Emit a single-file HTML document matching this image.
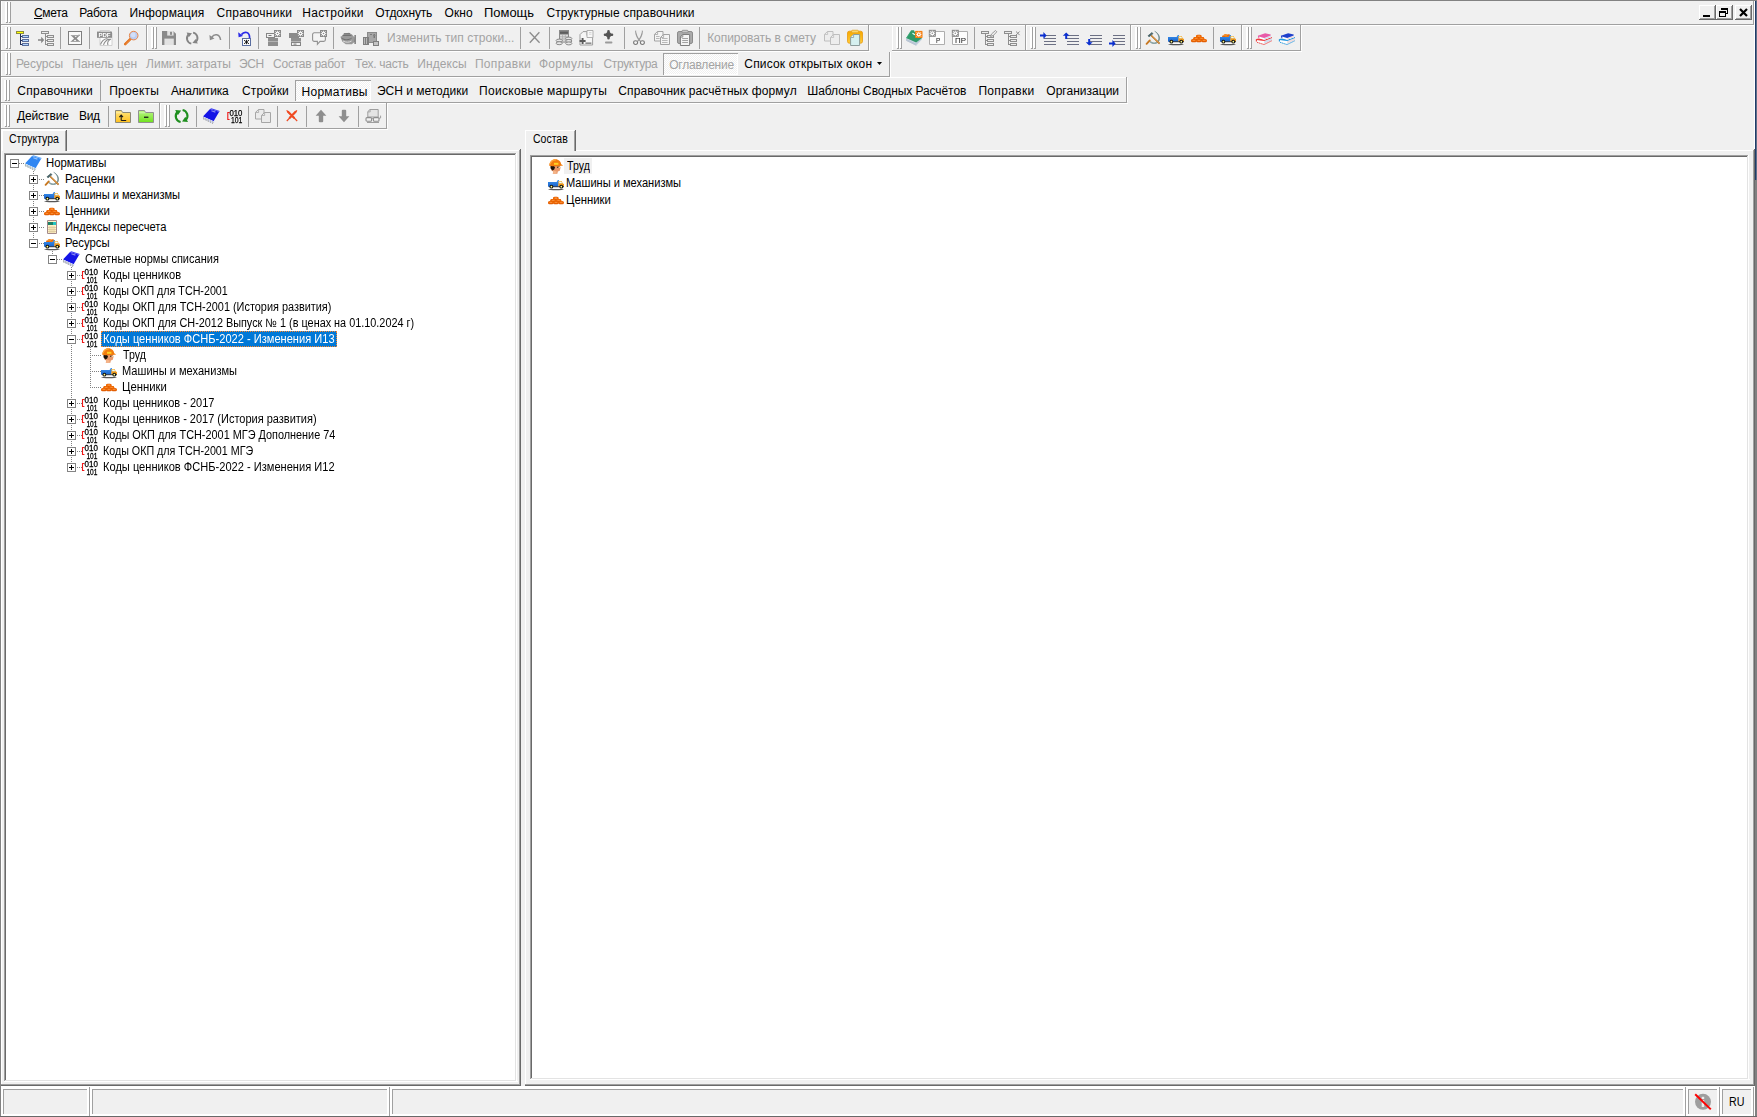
<!DOCTYPE html>
<html lang="ru"><head><meta charset="utf-8"><title>Смета</title>
<style>
html,body{margin:0;padding:0;}
body{width:1757px;height:1117px;overflow:hidden;background:#F0F0F0;position:relative;font-family:"Liberation Sans",sans-serif;}
i{position:absolute;display:block;}
svg{position:absolute;display:block;overflow:visible;}
svg.gl{will-change:transform;}
span{position:absolute;white-space:pre;line-height:1.117;transform-origin:0 0;}
span u{text-decoration:underline;text-underline-offset:1px;}
</style></head><body>
<i style="left:0px;top:0px;width:1757px;height:1px;background:#828282;"></i>
<i style="left:0px;top:0px;width:1px;height:1117px;background:#828282;"></i>
<i style="left:1px;top:1px;width:1px;height:1116px;background:#FFFFFF;"></i>
<i style="left:1754px;top:1px;width:1px;height:1116px;background:#FFFFFF;"></i>
<i style="left:1755px;top:1px;width:1px;height:179px;background:#1F3B69;"></i>
<i style="left:1756px;top:1px;width:1px;height:179px;background:#5F6F88;"></i>
<i style="left:1755px;top:180px;width:2px;height:937px;background:#808080;"></i>
<i style="left:5px;top:2px;width:2px;height:20px;background:#FFFFFF;"></i>
<i style="left:7px;top:2px;width:1px;height:21px;background:#A0A0A0;"></i>
<i style="left:6px;top:22px;width:2px;height:1px;background:#A0A0A0;"></i>
<i style="left:8px;top:2px;width:2px;height:20px;background:#FFFFFF;"></i>
<i style="left:10px;top:2px;width:1px;height:21px;background:#A0A0A0;"></i>
<i style="left:9px;top:22px;width:2px;height:1px;background:#A0A0A0;"></i>
<i style="left:1px;top:24px;width:1753px;height:1px;background:#A0A0A0;"></i>
<i style="left:1px;top:25px;width:1753px;height:1px;background:#FFFFFF;"></i>
<i style="left:1753px;top:1px;width:1px;height:24px;background:#A0A0A0;"></i>
<i style="left:1699px;top:5px;width:17px;height:15px;background:#F0F0F0;"></i>
<i style="left:1699px;top:5px;width:16px;height:1px;background:#FFFFFF;"></i>
<i style="left:1699px;top:5px;width:1px;height:14px;background:#FFFFFF;"></i>
<i style="left:1700px;top:18px;width:15px;height:1px;background:#A0A0A0;"></i>
<i style="left:1714px;top:6px;width:1px;height:13px;background:#A0A0A0;"></i>
<i style="left:1699px;top:19px;width:17px;height:1px;background:#696969;"></i>
<i style="left:1715px;top:5px;width:1px;height:15px;background:#696969;"></i>
<i style="left:1716px;top:5px;width:17px;height:15px;background:#F0F0F0;"></i>
<i style="left:1716px;top:5px;width:16px;height:1px;background:#FFFFFF;"></i>
<i style="left:1716px;top:5px;width:1px;height:14px;background:#FFFFFF;"></i>
<i style="left:1717px;top:18px;width:15px;height:1px;background:#A0A0A0;"></i>
<i style="left:1731px;top:6px;width:1px;height:13px;background:#A0A0A0;"></i>
<i style="left:1716px;top:19px;width:17px;height:1px;background:#696969;"></i>
<i style="left:1732px;top:5px;width:1px;height:15px;background:#696969;"></i>
<i style="left:1735px;top:5px;width:17px;height:15px;background:#F0F0F0;"></i>
<i style="left:1735px;top:5px;width:16px;height:1px;background:#FFFFFF;"></i>
<i style="left:1735px;top:5px;width:1px;height:14px;background:#FFFFFF;"></i>
<i style="left:1736px;top:18px;width:15px;height:1px;background:#A0A0A0;"></i>
<i style="left:1750px;top:6px;width:1px;height:13px;background:#A0A0A0;"></i>
<i style="left:1735px;top:19px;width:17px;height:1px;background:#696969;"></i>
<i style="left:1751px;top:5px;width:1px;height:15px;background:#696969;"></i>
<i style="left:1703px;top:15px;width:7px;height:2px;background:#000;"></i>
<svg style="left:1719px;top:8px" width="10" height="10" viewBox="0 0 10 10" shape-rendering="crispEdges"><path d="M2.5 0.5h6v5h-1.5M2.5 1h6" fill="none" stroke="#000" stroke-width="1"/><rect x="2" y="0" width="7" height="2" fill="#000"/><rect x="0.5" y="3.5" width="6" height="5" fill="none" stroke="#000"/><rect x="0" y="3" width="7" height="2" fill="#000"/></svg>
<svg style="left:1739px;top:8px" width="9" height="9" viewBox="0 0 9 9" ><path d="M1 1L8 8M8 1L1 8" stroke="#000" stroke-width="2.2" fill="none"/></svg>
<i style="left:5px;top:27px;width:2px;height:21px;background:#FFFFFF;"></i>
<i style="left:7px;top:27px;width:1px;height:22px;background:#A0A0A0;"></i>
<i style="left:6px;top:48px;width:2px;height:1px;background:#A0A0A0;"></i>
<i style="left:8px;top:27px;width:2px;height:21px;background:#FFFFFF;"></i>
<i style="left:10px;top:27px;width:1px;height:22px;background:#A0A0A0;"></i>
<i style="left:9px;top:48px;width:2px;height:1px;background:#A0A0A0;"></i>
<svg style="left:16px;top:30px" width="16" height="16" viewBox="0 0 16 16" shape-rendering="crispEdges"><rect x="0" y="1" width="8" height="3" fill="#8E8E3C" /><rect x="1" y="2" width="6" height="1" fill="#FFFF00" /><rect x="4" y="4" width="1" height="11" fill="#25325A" /><rect x="5" y="6" width="1" height="1" fill="#25325A" /><rect x="6" y="5" width="7" height="3" fill="#5A6E9C" /><rect x="7" y="6" width="5" height="1" fill="#B4D6FF" /><rect x="5" y="10" width="1" height="1" fill="#25325A" /><rect x="6" y="9" width="7" height="3" fill="#5A6E9C" /><rect x="7" y="10" width="5" height="1" fill="#B4D6FF" /><rect x="5" y="14" width="1" height="1" fill="#25325A" /><rect x="6" y="13" width="7" height="3" fill="#5A6E9C" /><rect x="7" y="14" width="5" height="1" fill="#B4D6FF" /></svg>
<svg style="left:38px;top:30px" width="16" height="16" viewBox="0 0 16 16" ><g shape-rendering="crispEdges"><rect x="3" y="1" width="8" height="3" fill="#8E8E8E" /><rect x="4" y="2" width="6" height="1" fill="#ECECEC" /><rect x="7" y="4" width="1" height="11" fill="#8E8E8E" /><rect x="8" y="6" width="1" height="1" fill="#8E8E8E" /><rect x="9" y="5" width="7" height="3" fill="#8E8E8E" /><rect x="10" y="6" width="5" height="1" fill="#ECECEC" /><rect x="8" y="10" width="1" height="1" fill="#8E8E8E" /><rect x="9" y="9" width="7" height="3" fill="#8E8E8E" /><rect x="10" y="10" width="5" height="1" fill="#ECECEC" /><rect x="8" y="14" width="1" height="1" fill="#8E8E8E" /><rect x="9" y="13" width="7" height="3" fill="#8E8E8E" /><rect x="10" y="14" width="5" height="1" fill="#ECECEC" /></g><path d="M0 9.2h3.2v-2.4l3 3.2-3 3.2v-2.4h-3.2z" fill="#858585"/></svg>
<i style="left:60px;top:27px;width:1px;height:22px;background:#A0A0A0;"></i>
<svg style="left:68px;top:30px" width="16" height="16" viewBox="0 0 16 16" ><rect x="0" y="1" width="14" height="14" fill="#7E7E7E" /><rect x="1" y="2" width="12" height="12" fill="#FAFAFA" /><path d="M2.5 5l3.2 0 2 2.2 2.6-2.4 2 0-3.6 3.6 3.4 3.4-3 0-2-2.2-2.6 2.4-2.2 0 3.8-3.6z" fill="#8C8C8C"/><path d="M3 5.5h9M3 11.5h9" stroke="#A8A8A8" stroke-width="1"/></svg>
<i style="left:89px;top:27px;width:1px;height:22px;background:#A0A0A0;"></i>
<svg style="left:97px;top:30px" width="16" height="16" viewBox="0 0 16 16"  class="gl"><path d="M3 0.5h9.5l2.5 2.5v12.5h-12z" fill="#FCFCFC" stroke="#C8C8C8" stroke-width="0.8"/><rect x="0" y="1.6" width="15" height="6.2" fill="#8C8C8C" /><text x="1.4" y="6.9" font-family="Liberation Sans,sans-serif" font-weight="bold" font-size="6.2" fill="#fff" textLength="12.2" lengthAdjust="spacingAndGlyphs">PDF</text><path d="M3.5 14.5c1-3 3.5-5.5 7-6M6.5 14.8c1-3 3-5 6-5.8M11 15c-1-2.2 0-4.8 3-6" stroke="#8C8C8C" stroke-width="1.1" fill="none"/></svg>
<i style="left:118px;top:27px;width:1px;height:22px;background:#A0A0A0;"></i>
<svg style="left:124.4px;top:30px" width="16" height="16" viewBox="0 0 16 16" ><path d="M1.2 14.2L6.8 8.6" stroke="#E06A10" stroke-width="2.4" stroke-linecap="round"/><path d="M1.6 14L6.6 9" stroke="#F5A060" stroke-width="0.8" stroke-linecap="round"/><circle cx="9.7" cy="5.6" r="4.3" fill="#BCCDF2" stroke="#E8864A" stroke-width="1"/><circle cx="9.2" cy="5" r="2.4" fill="#D8E4FA" opacity=".8"/></svg>
<i style="left:146px;top:25px;width:1px;height:26px;background:#A0A0A0;"></i>
<i style="left:147px;top:26px;width:1px;height:24px;background:#FFFFFF;"></i>
<i style="left:151px;top:27px;width:2px;height:21px;background:#FFFFFF;"></i>
<i style="left:153px;top:27px;width:1px;height:22px;background:#A0A0A0;"></i>
<i style="left:152px;top:48px;width:2px;height:1px;background:#A0A0A0;"></i>
<i style="left:154px;top:27px;width:2px;height:21px;background:#FFFFFF;"></i>
<i style="left:156px;top:27px;width:1px;height:22px;background:#A0A0A0;"></i>
<i style="left:155px;top:48px;width:2px;height:1px;background:#A0A0A0;"></i>
<svg style="left:162px;top:30px" width="16" height="16" viewBox="0 0 16 16" ><path d="M0 1h11.2l2.8 2.8v11.2h-14z" fill="#8A8A8A"/><rect x="2.4" y="8.6" width="9.4" height="6.4" fill="#E2E2E2" /><rect x="5.2" y="1" width="6.4" height="4.6" fill="#E2E2E2" /><rect x="8.2" y="1.8" width="1.6" height="3" fill="#787878" /></svg>
<svg style="left:185.3px;top:29.9px" width="16" height="16" viewBox="0 0 16 16" ><path d="M6.3 13.6A5.4 5.4 0 0 1 3.4 4.6" fill="none" stroke="#858585" stroke-width="1.9"/><path d="M1.6 2.6l5.4 0.6-3.2 4z" fill="#858585"/><path d="M8.1 2.6A5.4 5.4 0 0 1 11 11.6" fill="none" stroke="#858585" stroke-width="1.9"/><path d="M12.8 13.6l-5.4-0.6 3.2-4z" fill="#858585"/></svg>
<svg style="left:208px;top:30px" width="16" height="16" viewBox="0 0 16 16" ><path d="M3.6 7.6C6 3.6 11.6 3.4 12.6 10" fill="none" stroke="#8C8C8C" stroke-width="1.5"/><path d="M1.4 5l0.5 5.2 4.6-1.6z" fill="#8C8C8C"/></svg>
<i style="left:229px;top:27px;width:1px;height:22px;background:#A0A0A0;"></i>
<svg style="left:237px;top:30px" width="16" height="16" viewBox="0 0 16 16" ><path d="M4.4 4.6C7.4 0.8 12.8 1.6 12.6 8" fill="none" stroke="#2B2BE8" stroke-width="1.7"/><path d="M1.2 2.2l0.4 5 4.4-1.2z" fill="#2B2BE8"/><rect x="5" y="8" width="9" height="8" fill="#5A6EA0" /><rect x="6" y="9" width="7" height="6" fill="#fff" /><path d="M7 10.2l5 3.6M12 10.2l-5 3.6M9.5 9.8v4.4" stroke="#111" stroke-width="0.9"/></svg>
<i style="left:258px;top:27px;width:1px;height:22px;background:#A0A0A0;"></i>
<svg style="left:266px;top:30px" width="16" height="16" viewBox="0 0 16 16" ><rect x="0" y="3" width="9" height="5" fill="#858585" /><rect x="1" y="4" width="7" height="3" fill="#F2F2F2" /><rect x="2.5" y="5" width="3" height="1" fill="#777" /><rect x="2" y="8" width="10" height="3.6" fill="#8E8E8E" /><rect x="2" y="12" width="10" height="4" fill="#8E8E8E" /><rect x="8" y="0" width="7" height="7" fill="#8A8A8A" /><path d="M9.2 1.2000000000000002L13.8 5.8M13.8 1.2000000000000002L9.2 5.8M11.5 0.7000000000000002V6.3M8.7 3.5H14.3" stroke="#fff" stroke-width="0.7"/><circle cx="11.5" cy="3.5" r="1.9" fill="#fff"/><circle cx="11.5" cy="3.5" r="0.8" fill="#8A8A8A"/></svg>
<svg style="left:289px;top:30px" width="16" height="16" viewBox="0 0 16 16" ><rect x="0" y="3" width="10" height="5" fill="#8A8A8A" /><rect x="2" y="8" width="10" height="3.6" fill="#8E8E8E" /><rect x="2" y="12" width="10" height="4" fill="#858585" /><rect x="3" y="13" width="8" height="2" fill="#F2F2F2" /><rect x="4.5" y="13.6" width="3" height="1" fill="#777" /><rect x="8" y="0" width="7" height="7" fill="#8A8A8A" /><path d="M9.2 1.2000000000000002L13.8 5.8M13.8 1.2000000000000002L9.2 5.8M11.5 0.7000000000000002V6.3M8.7 3.5H14.3" stroke="#fff" stroke-width="0.7"/><circle cx="11.5" cy="3.5" r="1.9" fill="#fff"/><circle cx="11.5" cy="3.5" r="0.8" fill="#8A8A8A"/></svg>
<svg style="left:312px;top:30px" width="16" height="16" viewBox="0 0 16 16" ><path d="M2.2 2.8h9.6a1.6 1.6 0 0 1 1.6 1.6v5.4a1.6 1.6 0 0 1-1.6 1.6h-3.8l-2.6 3v-3h-3.2a1.6 1.6 0 0 1-1.6-1.6v-5.4a1.6 1.6 0 0 1 1.6-1.6z" fill="#F4F4F4" stroke="#929292" stroke-width="1.1"/><rect x="8" y="0" width="7" height="7" fill="#8A8A8A" /><path d="M9.2 1.2000000000000002L13.8 5.8M13.8 1.2000000000000002L9.2 5.8M11.5 0.7000000000000002V6.3M8.7 3.5H14.3" stroke="#fff" stroke-width="0.7"/><circle cx="11.5" cy="3.5" r="1.9" fill="#fff"/><circle cx="11.5" cy="3.5" r="0.8" fill="#8A8A8A"/></svg>
<i style="left:333px;top:27px;width:1px;height:22px;background:#A0A0A0;"></i>
<svg style="left:339.5px;top:30px" width="16" height="16" viewBox="0 0 16 16" ><path d="M0.4 6.8l2.6-1.4 0.6-1.8 5.4-0.8 3 1.6 2.4 2.8 0.4 4.6-3 2.4h-6l-3.6-2.6z" fill="#9A9A9A"/><path d="M2.4 5.4h9M4 3.8h6M1.6 8.2c3 2 7 2 10 0" stroke="#6E6E6E" stroke-width="1" fill="none"/><path d="M3 11c3 1.6 6 1.6 8.6 0" stroke="#DADADA" stroke-width="1" fill="none"/><rect x="14.6" y="5" width="1" height="9" fill="#444" /></svg>
<svg style="left:363px;top:30px" width="16" height="16" viewBox="0 0 16 16" ><rect x="4" y="2" width="10" height="11" fill="#8A8A8A" /><rect x="5" y="3" width="8" height="9" fill="#A6A6A6" /><path d="M7 4.5h2M10.5 4.5h1.5M10.5 5l1 3M12 5l-1 3" stroke="#6E6E6E" stroke-width="0.8"/><rect x="0" y="7" width="6" height="8" fill="#7E7E7E" /><rect x="1" y="8" width="1" height="6" fill="#B8B8B8" /><rect x="3" y="8" width="1" height="6" fill="#B8B8B8" /><rect x="10" y="11" width="6" height="5" fill="#7E7E7E" /><rect x="11" y="12" width="4" height="3" fill="#C4C4C4" /></svg>
<i style="left:520px;top:27px;width:1px;height:22px;background:#A0A0A0;"></i>
<svg style="left:526.8px;top:30px" width="16" height="16" viewBox="0 0 16 16" ><path d="M2.6 2.2L12.6 12.8M12.4 2.2L2.8 12.8" stroke="#8C8C8C" stroke-width="1.3" fill="none"/></svg>
<i style="left:549px;top:27px;width:1px;height:22px;background:#A0A0A0;"></i>
<svg style="left:555.7px;top:30px" width="16" height="16" viewBox="0 0 16 16" ><rect x="3" y="0" width="10" height="12.6" fill="#8A8A8A" /><rect x="4" y="1.6" width="8" height="2.2" fill="#5E5E5E" /><rect x="4" y="4.6" width="8" height="7" fill="#DCDCDC" /><path d="M4 6.8h8M4 9h8M6.6 4.6v7M9.3 4.6v7" stroke="#A6A6A6" stroke-width="0.7"/><ellipse cx="3.2" cy="10.6" rx="3.1" ry="1.5" fill="#E8E8E8" stroke="#808080" stroke-width="0.9"/><ellipse cx="3.2" cy="13.2" rx="3.1" ry="1.5" fill="#E8E8E8" stroke="#808080" stroke-width="0.9"/><ellipse cx="12.8" cy="8.6" rx="3.1" ry="1.5" fill="#E8E8E8" stroke="#808080" stroke-width="0.9"/><ellipse cx="12.8" cy="11" rx="3.1" ry="1.5" fill="#E8E8E8" stroke="#808080" stroke-width="0.9"/><ellipse cx="12.8" cy="13.4" rx="3.1" ry="1.5" fill="#E8E8E8" stroke="#808080" stroke-width="0.9"/></svg>
<svg style="left:579px;top:30px" width="16" height="16" viewBox="0 0 16 16" ><path d="M4 1.6h4v4M4 1.6l-3 3v10.4h12.6v-8" fill="#F6F6F6" stroke="#9C9C9C" stroke-width="1"/><path d="M8 0.5h6v7h-6z" fill="#F8F8F8" stroke="#A8A8A8" stroke-width="0.9"/><path d="M10 2.5h2.5M10 4.2h2.5" stroke="#C8C8C8" stroke-width="0.7"/><path d="M3.6 8v6M0.6 11h6" stroke="#5A5A5A" stroke-width="1.9"/><rect x="6.4" y="12.4" width="6" height="1.6" fill="#8E8E8E" /></svg>
<svg style="left:600.8px;top:30px" width="16" height="16" viewBox="0 0 16 16" ><path d="M7.5 1.2v7M4 4.7h7" stroke="#555" stroke-width="2.6" stroke-linecap="round"/><circle cx="7.5" cy="4.7" r="2.6" fill="#555"/><rect x="4" y="11.6" width="7.4" height="2" rx="0.8" fill="#9A9A9A"/></svg>
<i style="left:624px;top:27px;width:1px;height:22px;background:#A0A0A0;"></i>
<svg style="left:630.7px;top:30px" width="16" height="16" viewBox="0 0 16 16" ><path d="M4.6 0.6c0.2 4 1.6 7.4 4.6 10.4M11.4 0.6c-0.2 4-1.6 7.4-4.6 10.4" fill="none" stroke="#9A9A9A" stroke-width="1.2"/><path d="M4.6 0.6l3.4 8 3.4-8" fill="#EDEDED" stroke="none" opacity=".6"/><ellipse cx="4.6" cy="12.6" rx="2" ry="1.9" fill="#F4F4F4" stroke="#7A7A7A" stroke-width="1.1"/><ellipse cx="11.4" cy="12.6" rx="2" ry="1.9" fill="#F4F4F4" stroke="#7A7A7A" stroke-width="1.1"/></svg>
<svg style="left:653.5px;top:30px" width="16" height="16" viewBox="0 0 16 16" ><path d="M3.4 1.5h5.6v9.5h-8.5v-6.6z" fill="#F4F4F4" stroke="#A2A2A2" stroke-width="1"/><path d="M3.6 1.5v3h-3" fill="none" stroke="#A2A2A2" stroke-width="0.8"/><path d="M9.4 4.5h6.1v10h-9v-7z" fill="#F4F4F4" stroke="#A2A2A2" stroke-width="1"/><path d="M9.6 4.5v3h-3" fill="none" stroke="#A2A2A2" stroke-width="0.8"/><path d="M2 6.5h3.6M2 8.5h3.6M8 8.5h5.6M8 10.5h5.6M8 12.5h5.6" stroke="#A8A8A8" stroke-width="0.8"/></svg>
<svg style="left:676.7px;top:30px" width="16" height="16" viewBox="0 0 16 16" ><rect x="0.5" y="1.5" width="15" height="12" rx="1.6" fill="#ABABAB" stroke="#8A8A8A" stroke-width="1"/><rect x="5" y="0.3" width="6" height="2.4" rx="0.8" fill="#C8C8C8" stroke="#8A8A8A" stroke-width="0.8"/><path d="M5.6 4.5h7v11h-9.2v-8.6z" fill="#F4F4F4" stroke="#7E7E7E" stroke-width="1"/><path d="M5.8 4.5v2.6h-2.4" fill="none" stroke="#7E7E7E" stroke-width="0.8"/><path d="M5.2 8.5h5.8M5.2 10.5h5.8M5.2 12.5h5.8" stroke="#8E8E8E" stroke-width="0.8"/></svg>
<i style="left:699px;top:27px;width:1px;height:22px;background:#A0A0A0;"></i>
<svg style="left:824.3px;top:30px" width="16" height="16" viewBox="0 0 16 16" ><path d="M3.4 1.5h5.6v9.5h-8.5v-6.6z" fill="#EDEDED" stroke="#BEBEBE" stroke-width="1"/><path d="M3.6 1.5v3h-3" fill="none" stroke="#BEBEBE" stroke-width="0.8"/><path d="M9.4 4.5h6.1v10h-9v-7z" fill="#EDEDED" stroke="#BEBEBE" stroke-width="1"/><path d="M9.6 4.5v3h-3" fill="none" stroke="#BEBEBE" stroke-width="0.8"/></svg>
<svg style="left:847px;top:30px" width="16" height="16" viewBox="0 0 16 16" ><defs><linearGradient id="py" x1="0" y1="0" x2="0" y2="1"><stop offset="0" stop-color="#F6A800"/><stop offset="1" stop-color="#FFCB3A"/></linearGradient></defs><rect x="0.5" y="1.2" width="15" height="12" rx="1.8" fill="url(#py)" stroke="#E89A10" stroke-width="0.8"/><rect x="4.6" y="0.2" width="6.8" height="2.6" rx="1" fill="#FFD667" stroke="#E0A020" stroke-width="0.7"/><path d="M6.4 4.5h6.2v11h-9v-8.2z" fill="#D6F0F0" stroke="#8C9C9C" stroke-width="1"/><path d="M6.6 4.5v3h-3" fill="#EAF8F8" stroke="#8C9C9C" stroke-width="0.8"/></svg>
<i style="left:868px;top:25px;width:1px;height:26px;background:#A0A0A0;"></i>
<i style="left:869px;top:26px;width:1px;height:24px;background:#FFFFFF;"></i>
<i style="left:892px;top:26px;width:1px;height:25px;background:#FFFFFF;"></i>
<i style="left:896px;top:27px;width:2px;height:21px;background:#FFFFFF;"></i>
<i style="left:898px;top:27px;width:1px;height:22px;background:#A0A0A0;"></i>
<i style="left:897px;top:48px;width:2px;height:1px;background:#A0A0A0;"></i>
<i style="left:899px;top:27px;width:2px;height:21px;background:#FFFFFF;"></i>
<i style="left:901px;top:27px;width:1px;height:22px;background:#A0A0A0;"></i>
<i style="left:900px;top:48px;width:2px;height:1px;background:#A0A0A0;"></i>
<svg style="left:906px;top:30px" width="16" height="16" viewBox="0 0 16 16" ><path d="M0.15 7.9v2.9l10 4.9 5.75-6.2v-1.6z" fill="#C9D5E2"/><path d="M0.3 9.4l9.9 4.8 5.6-6M0.3 10.4l9.9 4.8" stroke="#A9B7C8" stroke-width="0.6" fill="none"/><path d="M5.2 0.3h2.9l0.3 1.2 7.5 6.4-5.7 4.7-10.05-4.7z" fill="#2F9A6A"/><path d="M5.2 0.3l-5.05 7.6 1.2 0.5z" fill="#3FAE7C" opacity=".7"/><path d="M6.9 3.4l1.6 1.1" stroke="#E8FFF4" stroke-width="1.2" stroke-linecap="round"/><rect x="9.3" y="0.9" width="7" height="7" rx="1" fill="#F57E0E"/><rect x="9.3" y="0.9" width="7" height="7" fill="#F57E0E" /><path d="M10.5 2.1000000000000005L15.100000000000001 6.7M15.100000000000001 2.1000000000000005L10.5 6.7M12.8 1.6000000000000005V7.2M10.0 4.4H15.600000000000001" stroke="#fff" stroke-width="0.7"/><circle cx="12.8" cy="4.4" r="1.9" fill="#fff"/><circle cx="12.8" cy="4.4" r="0.8" fill="#F57E0E"/></svg>
<svg style="left:929px;top:30px" width="16" height="16" viewBox="0 0 16 16"  class="gl"><path d="M0.5 1.5h15v13h-15z" fill="#FDFDFD" stroke="#AEAEAE" stroke-width="1"/><rect x="0" y="0" width="6.6" height="6.6" rx="1" fill="#909090"/><rect x="-0.2" y="-0.2" width="7" height="7" fill="#909090" /><path d="M1.0 1.0L5.6 5.6M5.6 1.0L1.0 5.6M3.3 0.5V6.1M0.5 3.3H6.1" stroke="#fff" stroke-width="0.7"/><circle cx="3.3" cy="3.3" r="1.9" fill="#fff"/><circle cx="3.3" cy="3.3" r="0.8" fill="#909090"/><text x="7" y="12.9" font-family="Liberation Sans,sans-serif" font-size="7.8" fill="#111" textLength="4.3" lengthAdjust="spacingAndGlyphs">Р</text></svg>
<svg style="left:952px;top:30px" width="16" height="16" viewBox="0 0 16 16"  class="gl"><path d="M0.5 1.5h15v13h-15z" fill="#FDFDFD" stroke="#AEAEAE" stroke-width="1"/><rect x="0" y="0" width="6.6" height="6.6" rx="1" fill="#909090"/><rect x="-0.2" y="-0.2" width="7" height="7" fill="#909090" /><path d="M1.0 1.0L5.6 5.6M5.6 1.0L1.0 5.6M3.3 0.5V6.1M0.5 3.3H6.1" stroke="#fff" stroke-width="0.7"/><circle cx="3.3" cy="3.3" r="1.9" fill="#fff"/><circle cx="3.3" cy="3.3" r="0.8" fill="#909090"/><text x="3" y="12.9" font-family="Liberation Sans,sans-serif" font-size="7.8" fill="#111" textLength="11" lengthAdjust="spacingAndGlyphs">ПР</text></svg>
<i style="left:974px;top:27px;width:1px;height:22px;background:#A0A0A0;"></i>
<svg style="left:981px;top:30px" width="16" height="16" viewBox="0 0 16 16" ><g shape-rendering="crispEdges"><rect x="0" y="1" width="8" height="3" fill="#8E8E8E" /><rect x="1" y="2" width="6" height="1" fill="#ECECEC" /><rect x="4" y="4" width="1" height="11" fill="#8E8E8E" /><rect x="5" y="6" width="1" height="1" fill="#8E8E8E" /><rect x="6" y="5" width="7" height="3" fill="#8E8E8E" /><rect x="7" y="6" width="5" height="1" fill="#ECECEC" /><rect x="5" y="10" width="1" height="1" fill="#8E8E8E" /><rect x="6" y="9" width="7" height="3" fill="#8E8E8E" /><rect x="7" y="10" width="5" height="1" fill="#ECECEC" /><rect x="5" y="14" width="1" height="1" fill="#8E8E8E" /><rect x="6" y="13" width="7" height="3" fill="#8E8E8E" /><rect x="7" y="14" width="5" height="1" fill="#ECECEC" /></g><path d="M9.5 6.5l1-2.5 4-3.5 1.3 1.3-3.6 3.8z" fill="#F0F0F0" stroke="#8E8E8E" stroke-width="0.9"/></svg>
<svg style="left:1004px;top:30px" width="16" height="16" viewBox="0 0 16 16" ><g shape-rendering="crispEdges"><rect x="0" y="1" width="8" height="3" fill="#8E8E8E" /><rect x="1" y="2" width="6" height="1" fill="#ECECEC" /><rect x="4" y="4" width="1" height="11" fill="#8E8E8E" /><rect x="5" y="6" width="1" height="1" fill="#8E8E8E" /><rect x="6" y="5" width="7" height="3" fill="#8E8E8E" /><rect x="7" y="6" width="5" height="1" fill="#ECECEC" /><rect x="5" y="10" width="1" height="1" fill="#8E8E8E" /><rect x="6" y="9" width="7" height="3" fill="#8E8E8E" /><rect x="7" y="10" width="5" height="1" fill="#ECECEC" /><rect x="5" y="14" width="1" height="1" fill="#8E8E8E" /><rect x="6" y="13" width="7" height="3" fill="#8E8E8E" /><rect x="7" y="14" width="5" height="1" fill="#ECECEC" /></g><path d="M12 1.5l3.6 3.6M15.6 1.5l-3.6 3.6" stroke="#8E8E8E" stroke-width="1" fill="none"/></svg>
<i style="left:1025px;top:25px;width:1px;height:26px;background:#A0A0A0;"></i>
<i style="left:1026px;top:26px;width:1px;height:24px;background:#FFFFFF;"></i>
<i style="left:1030px;top:27px;width:2px;height:21px;background:#FFFFFF;"></i>
<i style="left:1032px;top:27px;width:1px;height:22px;background:#A0A0A0;"></i>
<i style="left:1031px;top:48px;width:2px;height:1px;background:#A0A0A0;"></i>
<i style="left:1033px;top:27px;width:2px;height:21px;background:#FFFFFF;"></i>
<i style="left:1035px;top:27px;width:1px;height:22px;background:#A0A0A0;"></i>
<i style="left:1034px;top:48px;width:2px;height:1px;background:#A0A0A0;"></i>
<svg style="left:1040px;top:30px" width="16" height="16" viewBox="0 0 16 16" ><g shape-rendering="crispEdges"><rect x="4" y="5" width="12" height="1" fill="#6C7084" /><rect x="4" y="8" width="12" height="1" fill="#6C7084" /><rect x="4" y="11" width="12" height="1" fill="#6C7084" /><rect x="4" y="14" width="12" height="1" fill="#6C7084" /></g><path d="M0 4.5h3.4v-2.6l3.2 3.6-3.2 3.6v-2.6h-3.4z" fill="#0A2FD0"/></svg>
<svg style="left:1063px;top:30px" width="16" height="16" viewBox="0 0 16 16" ><g shape-rendering="crispEdges"><rect x="4" y="5" width="12" height="1" fill="#6C7084" /><rect x="4" y="8" width="12" height="1" fill="#6C7084" /><rect x="4" y="11" width="12" height="1" fill="#6C7084" /><rect x="4" y="14" width="12" height="1" fill="#6C7084" /></g><path d="M2.2 9v-3.2h-2.4l3.4-3.2 3.4 3.2h-2.4v3.2z" fill="#0A2FD0"/></svg>
<svg style="left:1086px;top:30px" width="16" height="16" viewBox="0 0 16 16" ><g shape-rendering="crispEdges"><rect x="4" y="5" width="12" height="1" fill="#6C7084" /><rect x="4" y="8" width="12" height="1" fill="#6C7084" /><rect x="4" y="11" width="12" height="1" fill="#6C7084" /><rect x="4" y="14" width="12" height="1" fill="#6C7084" /></g><path d="M2.2 9v3.2h-2.4l3.4 3.2 3.4-3.2h-2.4v-3.2z" fill="#0A2FD0"/></svg>
<svg style="left:1109px;top:30px" width="16" height="16" viewBox="0 0 16 16" ><g shape-rendering="crispEdges"><rect x="4" y="5" width="12" height="1" fill="#6C7084" /><rect x="4" y="8" width="12" height="1" fill="#6C7084" /><rect x="4" y="11" width="12" height="1" fill="#6C7084" /><rect x="4" y="14" width="12" height="1" fill="#6C7084" /></g><path d="M0 12.5h3.4v-2.6l3.2 3.6-3.2 3.6v-2.6h-3.4z" fill="#0A2FD0"/></svg>
<i style="left:1130px;top:25px;width:1px;height:26px;background:#A0A0A0;"></i>
<i style="left:1131px;top:26px;width:1px;height:24px;background:#FFFFFF;"></i>
<i style="left:1135px;top:27px;width:2px;height:21px;background:#FFFFFF;"></i>
<i style="left:1137px;top:27px;width:1px;height:22px;background:#A0A0A0;"></i>
<i style="left:1136px;top:48px;width:2px;height:1px;background:#A0A0A0;"></i>
<i style="left:1138px;top:27px;width:2px;height:21px;background:#FFFFFF;"></i>
<i style="left:1140px;top:27px;width:1px;height:22px;background:#A0A0A0;"></i>
<i style="left:1139px;top:48px;width:2px;height:1px;background:#A0A0A0;"></i>
<svg style="left:1145px;top:30px" width="16" height="16" viewBox="0 0 16 16" ><path d="M9.6 1.2C14.4 3 16.6 8.4 13.4 12.2 11 15 6.6 14.4 4.4 12l0.9-1C7.6 12.8 10.6 13 12.4 11 14.6 8.4 13.2 3.8 9.6 1.2z" fill="#8CA4A6"/><path d="M9.6 1.2C13.6 3.4 15.4 7.6 13.6 11" fill="none" stroke="#5E7A7E" stroke-width="0.6"/><path d="M1.6 13.8l3.2-3.4" stroke="#C87820" stroke-width="1.9" stroke-linecap="round"/><path d="M6 5.2l8.6 8.4" stroke="#B06A1C" stroke-width="1.6"/><path d="M6 5.2l8.2 8" stroke="#E8A048" stroke-width="0.8"/><path d="M3 5.8l4-3.2 1 1-4 3.2z" fill="#4A6468" stroke="#4A6468" stroke-width="0.8" stroke-linejoin="round"/></svg>
<svg style="left:1168px;top:30px" width="16" height="16" viewBox="0 0 16 16" ><defs><linearGradient id="tb" x1="0" y1="0" x2="0" y2="1"><stop offset="0" stop-color="#3A92F0"/><stop offset="1" stop-color="#1B63C8"/></linearGradient></defs><ellipse cx="8" cy="14.5" rx="7.8" ry="0.7" fill="#3a3a3a" opacity=".85"/><path d="M0 7h8.6l1.2-1.9h1.2l-0.6 6.6h-10.4z" fill="url(#tb)"/><path d="M10.6 5.9h2.9l1.3 2.5 1.2 0.5v2.8h-5.7z" fill="#F09A1C"/><path d="M10.6 5.9h2.9l0.6 1.2h-3.6z" fill="#F8B84A"/><path d="M11.2 6.7h2.2l0.7 1.5h-2.9z" fill="#E6FFFF"/><rect x="0.6" y="12" width="15" height="2" fill="#fff" opacity=".85"/><rect x="1.4" y="11.4" width="14.6" height="0.8" fill="#1a1a1a" /><circle cx="3.4" cy="11.7" r="1.9" fill="#111"/><circle cx="3.4" cy="11.7" r="0.85" fill="#FFFF8A"/><circle cx="13.3" cy="11.7" r="1.9" fill="#111"/><circle cx="13.3" cy="11.7" r="0.85" fill="#FFFF8A"/></svg>
<svg style="left:1191px;top:30px" width="16" height="16" viewBox="0 0 16 16" ><rect x="5.05" y="4.8500000000000005" width="5.5" height="3.1" rx="1.5" fill="#D85400"/><rect x="5.199999999999999" y="4.9" width="5.2" height="2.4" rx="1.2" fill="#F06A04"/><rect x="6.6" y="5.8500000000000005" width="2.6" height="0.6" rx="0.3" fill="#FFAE66"/><rect x="2.3499999999999996" y="6.95" width="5.5" height="3.1" rx="1.5" fill="#D85400"/><rect x="2.4999999999999996" y="7.0" width="5.2" height="2.4" rx="1.2" fill="#F06A04"/><rect x="3.8999999999999995" y="7.95" width="2.6" height="0.6" rx="0.3" fill="#FFAE66"/><rect x="7.75" y="6.95" width="5.5" height="3.1" rx="1.5" fill="#D85400"/><rect x="7.9" y="7.0" width="5.2" height="2.4" rx="1.2" fill="#F06A04"/><rect x="9.3" y="7.95" width="2.6" height="0.6" rx="0.3" fill="#FFAE66"/><rect x="0.04999999999999982" y="9.149999999999999" width="5.5" height="3.1" rx="1.5" fill="#D85400"/><rect x="0.19999999999999973" y="9.2" width="5.2" height="2.4" rx="1.2" fill="#F06A04"/><rect x="1.5999999999999999" y="10.149999999999999" width="2.6" height="0.6" rx="0.3" fill="#FFAE66"/><rect x="5.15" y="9.149999999999999" width="5.5" height="3.1" rx="1.5" fill="#D85400"/><rect x="5.300000000000001" y="9.2" width="5.2" height="2.4" rx="1.2" fill="#F06A04"/><rect x="6.7" y="10.149999999999999" width="2.6" height="0.6" rx="0.3" fill="#FFAE66"/><rect x="10.35" y="9.149999999999999" width="5.5" height="3.1" rx="1.5" fill="#D85400"/><rect x="10.5" y="9.2" width="5.2" height="2.4" rx="1.2" fill="#F06A04"/><rect x="11.9" y="10.149999999999999" width="2.6" height="0.6" rx="0.3" fill="#FFAE66"/></svg>
<i style="left:1213px;top:27px;width:1px;height:22px;background:#A0A0A0;"></i>
<svg style="left:1220px;top:30px" width="16" height="16" viewBox="0 0 16 16" ><defs><linearGradient id="tb" x1="0" y1="0" x2="0" y2="1"><stop offset="0" stop-color="#3A92F0"/><stop offset="1" stop-color="#1B63C8"/></linearGradient></defs><ellipse cx="8" cy="14.5" rx="7.8" ry="0.7" fill="#3a3a3a" opacity=".85"/><ellipse cx="4" cy="6.4" rx="2" ry="1.2" fill="#E86A08"/><ellipse cx="7" cy="6.2" rx="2" ry="1.2" fill="#F07A10"/><ellipse cx="5.6" cy="5" rx="2" ry="1.1" fill="#F58A20"/><ellipse cx="8.6" cy="5.2" rx="1.6" ry="1" fill="#E86A08"/><path d="M0 7h8.6l1.2-1.9h1.2l-0.6 6.6h-10.4z" fill="url(#tb)"/><path d="M10.6 5.9h2.9l1.3 2.5 1.2 0.5v2.8h-5.7z" fill="#F09A1C"/><path d="M10.6 5.9h2.9l0.6 1.2h-3.6z" fill="#F8B84A"/><path d="M11.2 6.7h2.2l0.7 1.5h-2.9z" fill="#E6FFFF"/><rect x="0.6" y="12" width="15" height="2" fill="#fff" opacity=".85"/><rect x="1.4" y="11.4" width="14.6" height="0.8" fill="#1a1a1a" /><circle cx="3.4" cy="11.7" r="1.9" fill="#111"/><circle cx="3.4" cy="11.7" r="0.85" fill="#FFFF8A"/><circle cx="13.3" cy="11.7" r="1.9" fill="#111"/><circle cx="13.3" cy="11.7" r="0.85" fill="#FFFF8A"/></svg>
<i style="left:1241px;top:25px;width:1px;height:26px;background:#A0A0A0;"></i>
<i style="left:1242px;top:26px;width:1px;height:24px;background:#FFFFFF;"></i>
<i style="left:1246px;top:27px;width:2px;height:21px;background:#FFFFFF;"></i>
<i style="left:1248px;top:27px;width:1px;height:22px;background:#A0A0A0;"></i>
<i style="left:1247px;top:48px;width:2px;height:1px;background:#A0A0A0;"></i>
<i style="left:1249px;top:27px;width:2px;height:21px;background:#FFFFFF;"></i>
<i style="left:1251px;top:27px;width:1px;height:22px;background:#A0A0A0;"></i>
<i style="left:1250px;top:48px;width:2px;height:1px;background:#A0A0A0;"></i>
<svg style="left:1256px;top:30px" width="16" height="16" viewBox="0 0 16 16" ><path d="M0.6 10l7.6 1 7.7-2.9v2.3l-7.7 3.1-7.1-1.6z" fill="#fff"/><path d="M8.2 11l7.7-2.9v2.3l-7.7 3z" fill="#D0DEEE"/><path d="M1.1 12.3l6.9 2.3 7.9-3.9" fill="none" stroke="#F03A3A" stroke-width="1" stroke-dasharray="1.4 0.8"/><path d="M0.3 9.1l2.6-0.7 5.3 1.4 7.7-2.8 0.1 0.9-7.8 3-7.8-0.9z" fill="#F03A3A"/><path d="M0.4 9.2v2.4" stroke="#F03A3A" stroke-width="1.1"/><path d="M3.2 6.7l5 1.5 6.5-2.5 0.3 1.5-6.8 2.5-5-1.6z" fill="#fff"/><path d="M8.2 8.2l6.5-2.5 0.3 1.5-6.8 2.5z" fill="#D0DEEE"/><path d="M2.6 5.4l6.5-2.1 5.6 1.1v1.1l-6.5 2.6-5.3-1.5z" fill="#E85AA8"/><path d="M2.4 5.6l0.5 2.3" stroke="#E85AA8" stroke-width="1.1"/></svg>
<svg style="left:1279px;top:30px" width="16" height="16" viewBox="0 0 16 16" ><path d="M0.6 10l7.6 1 7.7-2.9v2.3l-7.7 3.1-7.1-1.6z" fill="#fff"/><path d="M8.2 11l7.7-2.9v2.3l-7.7 3z" fill="#F0DCDC"/><path d="M1.1 12.3l6.9 2.3 7.9-3.9" fill="none" stroke="#1E96E0" stroke-width="1" stroke-dasharray="1.4 0.8"/><path d="M0.3 9.1l2.6-0.7 5.3 1.4 7.7-2.8 0.1 0.9-7.8 3-7.8-0.9z" fill="#1E96E0"/><path d="M0.4 9.2v2.4" stroke="#1E96E0" stroke-width="1.1"/><path d="M3.2 6.7l5 1.5 6.5-2.5 0.3 1.5-6.8 2.5-5-1.6z" fill="#fff"/><path d="M8.2 8.2l6.5-2.5 0.3 1.5-6.8 2.5z" fill="#F0DCDC"/><path d="M2.6 5.4l6.5-2.1 5.6 1.1v1.1l-6.5 2.6-5.3-1.5z" fill="#2040CC"/><path d="M2.4 5.6l0.5 2.3" stroke="#2040CC" stroke-width="1.1"/></svg>
<i style="left:1300px;top:25px;width:1px;height:26px;background:#A0A0A0;"></i>
<i style="left:1301px;top:26px;width:1px;height:24px;background:#FFFFFF;"></i>
<i style="left:1px;top:50px;width:868px;height:1px;background:#A0A0A0;"></i>
<i style="left:1px;top:51px;width:869px;height:1px;background:#FFFFFF;"></i>
<i style="left:892px;top:50px;width:409px;height:1px;background:#A0A0A0;"></i>
<i style="left:892px;top:51px;width:410px;height:1px;background:#FFFFFF;"></i>
<i style="left:5px;top:53px;width:2px;height:21px;background:#FFFFFF;"></i>
<i style="left:7px;top:53px;width:1px;height:22px;background:#A0A0A0;"></i>
<i style="left:6px;top:74px;width:2px;height:1px;background:#A0A0A0;"></i>
<i style="left:8px;top:53px;width:2px;height:21px;background:#FFFFFF;"></i>
<i style="left:10px;top:53px;width:1px;height:22px;background:#A0A0A0;"></i>
<i style="left:9px;top:74px;width:2px;height:1px;background:#A0A0A0;"></i>
<i style="left:663px;top:53px;width:75px;height:22px;background:repeating-conic-gradient(#fff 0 25%,#F0F0F0 0 50%) 0 0/2px 2px;"></i>
<i style="left:663px;top:53px;width:75px;height:1px;background:#A0A0A0;"></i>
<i style="left:663px;top:53px;width:1px;height:22px;background:#A0A0A0;"></i>
<i style="left:664px;top:74px;width:74px;height:1px;background:#FFFFFF;"></i>
<i style="left:737px;top:54px;width:1px;height:21px;background:#FFFFFF;"></i>
<svg style="left:877px;top:62px" width="5" height="3" viewBox="0 0 5 3" ><path d="M0 0h5L2.5 3z" fill="#000"/></svg>
<i style="left:1px;top:76px;width:889px;height:1px;background:#A0A0A0;"></i>
<i style="left:1px;top:77px;width:1126px;height:1px;background:#FFFFFF;"></i>
<i style="left:889px;top:52px;width:1px;height:25px;background:#A0A0A0;"></i>
<i style="left:890px;top:52px;width:1px;height:25px;background:#FFFFFF;"></i>
<i style="left:4px;top:80px;width:2px;height:20px;background:#FFFFFF;"></i>
<i style="left:6px;top:80px;width:1px;height:21px;background:#A0A0A0;"></i>
<i style="left:5px;top:100px;width:2px;height:1px;background:#A0A0A0;"></i>
<i style="left:7px;top:80px;width:2px;height:20px;background:#FFFFFF;"></i>
<i style="left:9px;top:80px;width:1px;height:21px;background:#A0A0A0;"></i>
<i style="left:8px;top:100px;width:2px;height:1px;background:#A0A0A0;"></i>
<i style="left:100px;top:80px;width:1px;height:21px;background:#A0A0A0;"></i>
<i style="left:295px;top:80px;width:76px;height:21px;background:repeating-conic-gradient(#fff 0 25%,#F0F0F0 0 50%) 0 0/2px 2px;"></i>
<i style="left:295px;top:80px;width:76px;height:1px;background:#A0A0A0;"></i>
<i style="left:295px;top:80px;width:1px;height:21px;background:#A0A0A0;"></i>
<i style="left:296px;top:100px;width:75px;height:1px;background:#FFFFFF;"></i>
<i style="left:370px;top:81px;width:1px;height:20px;background:#FFFFFF;"></i>
<i style="left:1px;top:102px;width:1126px;height:1px;background:#A0A0A0;"></i>
<i style="left:1px;top:103px;width:1127px;height:1px;background:#FFFFFF;"></i>
<i style="left:1126px;top:77px;width:1px;height:26px;background:#A0A0A0;"></i>
<i style="left:1127px;top:78px;width:1px;height:24px;background:#FFFFFF;"></i>
<i style="left:4px;top:105px;width:2px;height:21px;background:#FFFFFF;"></i>
<i style="left:6px;top:105px;width:1px;height:22px;background:#A0A0A0;"></i>
<i style="left:5px;top:126px;width:2px;height:1px;background:#A0A0A0;"></i>
<i style="left:7px;top:105px;width:2px;height:21px;background:#FFFFFF;"></i>
<i style="left:9px;top:105px;width:1px;height:22px;background:#A0A0A0;"></i>
<i style="left:8px;top:126px;width:2px;height:1px;background:#A0A0A0;"></i>
<i style="left:108px;top:106px;width:1px;height:21px;background:#A0A0A0;"></i>
<svg style="left:115px;top:108.8px" width="16" height="16" viewBox="0 0 16 16" ><defs><linearGradient id="fFFE680" x1="0" y1="0" x2="0" y2="1"><stop offset="0" stop-color="#FFE680"/><stop offset="1" stop-color="#FFC01E"/></linearGradient></defs><path d="M0.5 1.5h6l1 2h8v10h-15z" fill="url(#fFFE680)" stroke="#8E8A76" stroke-width="1"/><path d="M1 3.8h6.4" stroke="#fff" stroke-width="0.6" opacity=".7"/><path d="M6.2 11.6v-4.6M4.4 8.2l1.8-2.2 1.8 2.2M6.2 11.4h5" fill="none" stroke="#1a1a1a" stroke-width="1.05"/></svg>
<svg style="left:138px;top:108.8px" width="16" height="16" viewBox="0 0 16 16" ><defs><linearGradient id="fBDF58A" x1="0" y1="0" x2="0" y2="1"><stop offset="0" stop-color="#BDF58A"/><stop offset="1" stop-color="#6EE21C"/></linearGradient></defs><path d="M0.5 1.5h6l1 2h8v10h-15z" fill="url(#fBDF58A)" stroke="#909090" stroke-width="1"/><path d="M1 3.8h6.4" stroke="#fff" stroke-width="0.6" opacity=".7"/><rect x="6" y="7.6" width="4.4" height="1.3" fill="#1a1a1a" /></svg>
<i style="left:159px;top:103px;width:1px;height:26px;background:#A0A0A0;"></i>
<i style="left:160px;top:104px;width:1px;height:24px;background:#FFFFFF;"></i>
<i style="left:164px;top:105px;width:2px;height:21px;background:#FFFFFF;"></i>
<i style="left:166px;top:105px;width:1px;height:22px;background:#A0A0A0;"></i>
<i style="left:165px;top:126px;width:2px;height:1px;background:#A0A0A0;"></i>
<i style="left:167px;top:105px;width:2px;height:21px;background:#FFFFFF;"></i>
<i style="left:169px;top:105px;width:1px;height:22px;background:#A0A0A0;"></i>
<i style="left:168px;top:126px;width:2px;height:1px;background:#A0A0A0;"></i>
<svg style="left:174.2px;top:108.2px" width="16" height="16" viewBox="0 0 16 16" ><path d="M6.6 14A6 6 0 0 1 3.2 4.2" fill="none" stroke="#1F8F1F" stroke-width="2.1"/><path d="M1.2 2l6 0.6-3.4 4.6z" fill="#1F8F1F"/><path d="M8.6 2A6 6 0 0 1 12 11.8" fill="none" stroke="#1F8F1F" stroke-width="2.1"/><path d="M14 14l-6-0.6 3.4-4.6z" fill="#1F8F1F"/></svg>
<i style="left:196px;top:106px;width:1px;height:21px;background:#A0A0A0;"></i>
<svg style="left:203px;top:108.2px" width="16" height="16" viewBox="0 0 16 16" ><path d="M7 0.9l9.2 2.9-5.6 9.4-10.6-4.6z" fill="#1414E6"/><path d="M7 0.9l1.4-0.7 8.4 2.8-0.6 0.8z" fill="#3C3CF4"/><path d="M0 8.6l10.6 4.6 0.8-1.2v1.6l-1.4 2.2-10.2-4.8z" fill="#D6DCFF"/><path d="M0 9.6l10.4 4.7M0 10.7l10 4.8" stroke="#8C8C70" stroke-width="0.7" stroke-dasharray="1.5 1"/><path d="M8.4 2.8l4 1.3" stroke="#fff" stroke-width="1.2" opacity=".5"/></svg>
<svg style="left:225.5px;top:108px" width="16" height="16" viewBox="0 0 16 16"  class="gl"><path d="M3.6 4.5h-1.8v7h1.8" fill="none" stroke="#F01818" stroke-width="1.1"/><text x="3.4" y="7.8" font-family="Liberation Sans,sans-serif" font-size="9.2" fill="#000" stroke="#000" stroke-width="0.25" textLength="13" lengthAdjust="spacingAndGlyphs">010</text><text x="5" y="15.2" font-family="Liberation Sans,sans-serif" font-size="9.2" fill="#000" stroke="#000" stroke-width="0.25" textLength="11.4" lengthAdjust="spacingAndGlyphs">101</text></svg>
<i style="left:248px;top:106px;width:1px;height:21px;background:#A0A0A0;"></i>
<svg style="left:255px;top:108.4px" width="16" height="16" viewBox="0 0 16 16" ><path d="M3.4 1.5h5.6v9.5h-8.5v-6.6z" fill="#EBEBEB" stroke="#A6A6A6" stroke-width="1"/><path d="M3.6 1.5v3h-3" fill="none" stroke="#A6A6A6" stroke-width="0.8"/><path d="M9.4 4.5h6.1v10h-9v-7z" fill="#EBEBEB" stroke="#A6A6A6" stroke-width="1"/><path d="M9.6 4.5v3h-3" fill="none" stroke="#A6A6A6" stroke-width="0.8"/></svg>
<i style="left:277px;top:106px;width:1px;height:21px;background:#A0A0A0;"></i>
<svg style="left:284.2px;top:108px" width="16" height="16" viewBox="0 0 16 16" ><path d="M2.6 2.4L13.2 13M13 2.4L2.8 13" stroke="#F04A22" stroke-width="1.2" fill="none"/><path d="M4 3.8L10 9.8M11.6 3.8L5.8 9.8" stroke="#F04A22" stroke-width="2.2" stroke-linecap="round" fill="none"/></svg>
<i style="left:306px;top:106px;width:1px;height:21px;background:#A0A0A0;"></i>
<svg style="left:313px;top:108px" width="16" height="16" viewBox="0 0 16 16" ><path d="M8 1.8l5.4 6h-3.2v5.4a1 1 0 0 1-1 1h-2.4a1 1 0 0 1-1-1v-5.4h-3.2z" fill="#8E8E8E"/></svg>
<svg style="left:336px;top:108px" width="16" height="16" viewBox="0 0 16 16" ><path d="M8 14.2l5.4-6h-3.2v-5.4a1 1 0 0 0-1-1h-2.4a1 1 0 0 0-1 1v5.4h-3.2z" fill="#8E8E8E"/></svg>
<i style="left:358px;top:106px;width:1px;height:21px;background:#A0A0A0;"></i>
<svg style="left:365.4px;top:108px" width="16" height="16" viewBox="0 0 16 16" ><path d="M5 1.5h8.2v7.5h-10.4v-5.4z" fill="#E4E4E4" stroke="#9E9E9E" stroke-width="1"/><path d="M5.2 1.5v2.4h-2.4" fill="none" stroke="#9E9E9E" stroke-width="0.8"/><rect x="1" y="9.6" width="5.6" height="3.6" rx="1" fill="#F2F2F2" stroke="#8E8E8E" stroke-width="1.1"/><rect x="8.4" y="9.6" width="5.6" height="3.6" rx="1" fill="#F2F2F2" stroke="#8E8E8E" stroke-width="1.1"/><path d="M6.6 10.4h1.8M14 10.4l1.6-0.4v-2.4M2 14.5h12" fill="none" stroke="#9E9E9E" stroke-width="1"/></svg>
<i style="left:1px;top:128px;width:386px;height:1px;background:#A0A0A0;"></i>
<i style="left:1px;top:129px;width:387px;height:1px;background:#FFFFFF;"></i>
<i style="left:386px;top:103px;width:1px;height:26px;background:#A0A0A0;"></i>
<i style="left:387px;top:104px;width:1px;height:24px;background:#FFFFFF;"></i>
<i style="left:2px;top:130px;width:63px;height:1px;background:#FFFFFF;"></i>
<i style="left:2px;top:130px;width:1px;height:21px;background:#FFFFFF;"></i>
<i style="left:65px;top:131px;width:1px;height:20px;background:#A0A0A0;"></i>
<i style="left:66px;top:130px;width:1px;height:21px;background:#696969;"></i>
<i style="left:67px;top:150px;width:452px;height:1px;background:#FFFFFF;"></i>
<i style="left:519px;top:150px;width:1px;height:935px;background:#A0A0A0;"></i>
<i style="left:520px;top:149px;width:1px;height:937px;background:#696969;"></i>
<i style="left:1px;top:1084px;width:519px;height:1px;background:#A0A0A0;"></i>
<i style="left:1px;top:1085px;width:520px;height:1px;background:#696969;"></i>
<i style="left:4px;top:153px;width:513px;height:929px;background:#FFFFFF;"></i>
<i style="left:4px;top:153px;width:513px;height:1px;background:#A0A0A0;"></i>
<i style="left:4px;top:153px;width:1px;height:929px;background:#A0A0A0;"></i>
<i style="left:5px;top:154px;width:511px;height:1px;background:#696969;"></i>
<i style="left:5px;top:154px;width:1px;height:927px;background:#696969;"></i>
<i style="left:5px;top:1080px;width:512px;height:1px;background:#E3E3E3;"></i>
<i style="left:515px;top:154px;width:1px;height:927px;background:#E3E3E3;"></i>
<i style="left:4px;top:1081px;width:514px;height:1px;background:#FFFFFF;"></i>
<i style="left:516px;top:153px;width:1px;height:929px;background:#FFFFFF;"></i>
<i style="left:33px;top:171px;width:1px;height:73px;background:repeating-linear-gradient(to bottom,#808080 0,#808080 1px,transparent 1px,transparent 2px)"></i>
<i style="left:52px;top:251px;width:1px;height:9px;background:repeating-linear-gradient(to bottom,#808080 0,#808080 1px,transparent 1px,transparent 2px)"></i>
<i style="left:71px;top:267px;width:1px;height:201px;background:repeating-linear-gradient(to bottom,#808080 0,#808080 1px,transparent 1px,transparent 2px)"></i>
<i style="left:90px;top:347px;width:1px;height:41px;background:repeating-linear-gradient(to bottom,#808080 0,#808080 1px,transparent 1px,transparent 2px)"></i>
<i style="left:19px;top:163px;height:1px;width:5px;background:repeating-linear-gradient(to right,#808080 0,#808080 1px,transparent 1px,transparent 2px)"></i>
<i style="left:10px;top:159px;width:9px;height:9px;background:#fff;box-sizing:border-box;border:1px solid #848484"></i>
<i style="left:12px;top:163px;width:5px;height:1px;background:#000;"></i>
<svg style="left:25px;top:155.2px" width="16" height="16" viewBox="0 0 16 16" ><path d="M7 0.9l9.2 2.9-5.6 9.4-10.6-4.6z" fill="#2F86F2"/><path d="M7 0.9l1.4-0.7 8.4 2.8-0.6 0.8z" fill="#58A4FA"/><path d="M0 8.6l10.6 4.6 0.8-1.2v1.6l-1.4 2.2-10.2-4.8z" fill="#D4E8FF"/><path d="M0 9.6l10.4 4.7M0 10.7l10 4.8" stroke="#8C8C70" stroke-width="0.7" stroke-dasharray="1.5 1"/><path d="M8.4 2.8l4 1.3" stroke="#fff" stroke-width="1.2" opacity=".5"/></svg>
<i style="left:39px;top:179px;height:1px;width:5px;background:repeating-linear-gradient(to right,#808080 0,#808080 1px,transparent 1px,transparent 2px)"></i>
<i style="left:29px;top:175px;width:9px;height:9px;background:#fff;box-sizing:border-box;border:1px solid #848484"></i>
<i style="left:31px;top:179px;width:5px;height:1px;background:#000;"></i>
<i style="left:33px;top:177px;width:1px;height:5px;background:#000;"></i>
<svg style="left:44px;top:171px" width="16" height="16" viewBox="0 0 16 16" ><path d="M9.6 1.2C14.4 3 16.6 8.4 13.4 12.2 11 15 6.6 14.4 4.4 12l0.9-1C7.6 12.8 10.6 13 12.4 11 14.6 8.4 13.2 3.8 9.6 1.2z" fill="#8CA4A6"/><path d="M9.6 1.2C13.6 3.4 15.4 7.6 13.6 11" fill="none" stroke="#5E7A7E" stroke-width="0.6"/><path d="M1.6 13.8l3.2-3.4" stroke="#C87820" stroke-width="1.9" stroke-linecap="round"/><path d="M6 5.2l8.6 8.4" stroke="#B06A1C" stroke-width="1.6"/><path d="M6 5.2l8.2 8" stroke="#E8A048" stroke-width="0.8"/><path d="M3 5.8l4-3.2 1 1-4 3.2z" fill="#4A6468" stroke="#4A6468" stroke-width="0.8" stroke-linejoin="round"/></svg>
<i style="left:39px;top:195px;height:1px;width:5px;background:repeating-linear-gradient(to right,#808080 0,#808080 1px,transparent 1px,transparent 2px)"></i>
<i style="left:29px;top:191px;width:9px;height:9px;background:#fff;box-sizing:border-box;border:1px solid #848484"></i>
<i style="left:31px;top:195px;width:5px;height:1px;background:#000;"></i>
<i style="left:33px;top:193px;width:1px;height:5px;background:#000;"></i>
<svg style="left:44px;top:187px" width="16" height="16" viewBox="0 0 16 16" ><defs><linearGradient id="tb" x1="0" y1="0" x2="0" y2="1"><stop offset="0" stop-color="#3A92F0"/><stop offset="1" stop-color="#1B63C8"/></linearGradient></defs><ellipse cx="8" cy="14.5" rx="7.8" ry="0.7" fill="#3a3a3a" opacity=".85"/><path d="M0 7h8.6l1.2-1.9h1.2l-0.6 6.6h-10.4z" fill="url(#tb)"/><path d="M10.6 5.9h2.9l1.3 2.5 1.2 0.5v2.8h-5.7z" fill="#F09A1C"/><path d="M10.6 5.9h2.9l0.6 1.2h-3.6z" fill="#F8B84A"/><path d="M11.2 6.7h2.2l0.7 1.5h-2.9z" fill="#E6FFFF"/><rect x="0.6" y="12" width="15" height="2" fill="#fff" opacity=".85"/><rect x="1.4" y="11.4" width="14.6" height="0.8" fill="#1a1a1a" /><circle cx="3.4" cy="11.7" r="1.9" fill="#111"/><circle cx="3.4" cy="11.7" r="0.85" fill="#FFFF8A"/><circle cx="13.3" cy="11.7" r="1.9" fill="#111"/><circle cx="13.3" cy="11.7" r="0.85" fill="#FFFF8A"/></svg>
<i style="left:39px;top:211px;height:1px;width:5px;background:repeating-linear-gradient(to right,#808080 0,#808080 1px,transparent 1px,transparent 2px)"></i>
<i style="left:29px;top:207px;width:9px;height:9px;background:#fff;box-sizing:border-box;border:1px solid #848484"></i>
<i style="left:31px;top:211px;width:5px;height:1px;background:#000;"></i>
<i style="left:33px;top:209px;width:1px;height:5px;background:#000;"></i>
<svg style="left:44px;top:203px" width="16" height="16" viewBox="0 0 16 16" ><rect x="5.05" y="4.8500000000000005" width="5.5" height="3.1" rx="1.5" fill="#D85400"/><rect x="5.199999999999999" y="4.9" width="5.2" height="2.4" rx="1.2" fill="#F06A04"/><rect x="6.6" y="5.8500000000000005" width="2.6" height="0.6" rx="0.3" fill="#FFAE66"/><rect x="2.3499999999999996" y="6.95" width="5.5" height="3.1" rx="1.5" fill="#D85400"/><rect x="2.4999999999999996" y="7.0" width="5.2" height="2.4" rx="1.2" fill="#F06A04"/><rect x="3.8999999999999995" y="7.95" width="2.6" height="0.6" rx="0.3" fill="#FFAE66"/><rect x="7.75" y="6.95" width="5.5" height="3.1" rx="1.5" fill="#D85400"/><rect x="7.9" y="7.0" width="5.2" height="2.4" rx="1.2" fill="#F06A04"/><rect x="9.3" y="7.95" width="2.6" height="0.6" rx="0.3" fill="#FFAE66"/><rect x="0.04999999999999982" y="9.149999999999999" width="5.5" height="3.1" rx="1.5" fill="#D85400"/><rect x="0.19999999999999973" y="9.2" width="5.2" height="2.4" rx="1.2" fill="#F06A04"/><rect x="1.5999999999999999" y="10.149999999999999" width="2.6" height="0.6" rx="0.3" fill="#FFAE66"/><rect x="5.15" y="9.149999999999999" width="5.5" height="3.1" rx="1.5" fill="#D85400"/><rect x="5.300000000000001" y="9.2" width="5.2" height="2.4" rx="1.2" fill="#F06A04"/><rect x="6.7" y="10.149999999999999" width="2.6" height="0.6" rx="0.3" fill="#FFAE66"/><rect x="10.35" y="9.149999999999999" width="5.5" height="3.1" rx="1.5" fill="#D85400"/><rect x="10.5" y="9.2" width="5.2" height="2.4" rx="1.2" fill="#F06A04"/><rect x="11.9" y="10.149999999999999" width="2.6" height="0.6" rx="0.3" fill="#FFAE66"/></svg>
<i style="left:39px;top:227px;height:1px;width:5px;background:repeating-linear-gradient(to right,#808080 0,#808080 1px,transparent 1px,transparent 2px)"></i>
<i style="left:29px;top:223px;width:9px;height:9px;background:#fff;box-sizing:border-box;border:1px solid #848484"></i>
<i style="left:31px;top:227px;width:5px;height:1px;background:#000;"></i>
<i style="left:33px;top:225px;width:1px;height:5px;background:#000;"></i>
<svg style="left:44px;top:219px" width="16" height="16" viewBox="0 0 16 16" ><rect x="3" y="1" width="10" height="14" fill="#A48A8A" rx="1"/><rect x="4" y="2" width="8" height="12" fill="#FFF2C6" /><rect x="4" y="3" width="5" height="3" fill="#1F8068" /><rect x="9" y="3" width="3" height="3" fill="#22C4C4" /><path d="M4 8.5h8M4 10.5h8M4 12.5h8M6 7v7M8 7v7M10 7v7" stroke="#D8C49A" stroke-width="0.7"/></svg>
<i style="left:39px;top:243px;height:1px;width:5px;background:repeating-linear-gradient(to right,#808080 0,#808080 1px,transparent 1px,transparent 2px)"></i>
<i style="left:29px;top:239px;width:9px;height:9px;background:#fff;box-sizing:border-box;border:1px solid #848484"></i>
<i style="left:31px;top:243px;width:5px;height:1px;background:#000;"></i>
<svg style="left:44px;top:235px" width="16" height="16" viewBox="0 0 16 16" ><defs><linearGradient id="tb" x1="0" y1="0" x2="0" y2="1"><stop offset="0" stop-color="#3A92F0"/><stop offset="1" stop-color="#1B63C8"/></linearGradient></defs><ellipse cx="8" cy="14.5" rx="7.8" ry="0.7" fill="#3a3a3a" opacity=".85"/><ellipse cx="4" cy="6.4" rx="2" ry="1.2" fill="#E86A08"/><ellipse cx="7" cy="6.2" rx="2" ry="1.2" fill="#F07A10"/><ellipse cx="5.6" cy="5" rx="2" ry="1.1" fill="#F58A20"/><ellipse cx="8.6" cy="5.2" rx="1.6" ry="1" fill="#E86A08"/><path d="M0 7h8.6l1.2-1.9h1.2l-0.6 6.6h-10.4z" fill="url(#tb)"/><path d="M10.6 5.9h2.9l1.3 2.5 1.2 0.5v2.8h-5.7z" fill="#F09A1C"/><path d="M10.6 5.9h2.9l0.6 1.2h-3.6z" fill="#F8B84A"/><path d="M11.2 6.7h2.2l0.7 1.5h-2.9z" fill="#E6FFFF"/><rect x="0.6" y="12" width="15" height="2" fill="#fff" opacity=".85"/><rect x="1.4" y="11.4" width="14.6" height="0.8" fill="#1a1a1a" /><circle cx="3.4" cy="11.7" r="1.9" fill="#111"/><circle cx="3.4" cy="11.7" r="0.85" fill="#FFFF8A"/><circle cx="13.3" cy="11.7" r="1.9" fill="#111"/><circle cx="13.3" cy="11.7" r="0.85" fill="#FFFF8A"/></svg>
<i style="left:57px;top:259px;height:1px;width:5px;background:repeating-linear-gradient(to right,#808080 0,#808080 1px,transparent 1px,transparent 2px)"></i>
<i style="left:48px;top:255px;width:9px;height:9px;background:#fff;box-sizing:border-box;border:1px solid #848484"></i>
<i style="left:50px;top:259px;width:5px;height:1px;background:#000;"></i>
<svg style="left:63px;top:251.2px" width="16" height="16" viewBox="0 0 16 16" ><path d="M7 0.9l9.2 2.9-5.6 9.4-10.6-4.6z" fill="#1414E6"/><path d="M7 0.9l1.4-0.7 8.4 2.8-0.6 0.8z" fill="#3C3CF4"/><path d="M0 8.6l10.6 4.6 0.8-1.2v1.6l-1.4 2.2-10.2-4.8z" fill="#D6DCFF"/><path d="M0 9.6l10.4 4.7M0 10.7l10 4.8" stroke="#8C8C70" stroke-width="0.7" stroke-dasharray="1.5 1"/><path d="M8.4 2.8l4 1.3" stroke="#fff" stroke-width="1.2" opacity=".5"/></svg>
<i style="left:77px;top:275px;height:1px;width:5px;background:repeating-linear-gradient(to right,#808080 0,#808080 1px,transparent 1px,transparent 2px)"></i>
<i style="left:67px;top:271px;width:9px;height:9px;background:#fff;box-sizing:border-box;border:1px solid #848484"></i>
<i style="left:69px;top:275px;width:5px;height:1px;background:#000;"></i>
<i style="left:71px;top:273px;width:1px;height:5px;background:#000;"></i>
<svg style="left:82px;top:267px" width="16" height="16" viewBox="0 0 16 16"  class="gl"><path d="M2.4 4.5h-1.9v7h1.9" fill="none" stroke="#F01818" stroke-width="1.1"/><text x="2.6" y="7.8" font-family="Liberation Sans,sans-serif" font-size="9.6" fill="#000" stroke="#000" stroke-width="0.3" textLength="13.4" lengthAdjust="spacingAndGlyphs">010</text><text x="4.4" y="15.9" font-family="Liberation Sans,sans-serif" font-size="9.6" fill="#000" stroke="#000" stroke-width="0.3" textLength="11" lengthAdjust="spacingAndGlyphs">101</text></svg>
<i style="left:77px;top:291px;height:1px;width:5px;background:repeating-linear-gradient(to right,#808080 0,#808080 1px,transparent 1px,transparent 2px)"></i>
<i style="left:67px;top:287px;width:9px;height:9px;background:#fff;box-sizing:border-box;border:1px solid #848484"></i>
<i style="left:69px;top:291px;width:5px;height:1px;background:#000;"></i>
<i style="left:71px;top:289px;width:1px;height:5px;background:#000;"></i>
<svg style="left:82px;top:283px" width="16" height="16" viewBox="0 0 16 16"  class="gl"><path d="M2.4 4.5h-1.9v7h1.9" fill="none" stroke="#F01818" stroke-width="1.1"/><text x="2.6" y="7.8" font-family="Liberation Sans,sans-serif" font-size="9.6" fill="#000" stroke="#000" stroke-width="0.3" textLength="13.4" lengthAdjust="spacingAndGlyphs">010</text><text x="4.4" y="15.9" font-family="Liberation Sans,sans-serif" font-size="9.6" fill="#000" stroke="#000" stroke-width="0.3" textLength="11" lengthAdjust="spacingAndGlyphs">101</text></svg>
<i style="left:77px;top:307px;height:1px;width:5px;background:repeating-linear-gradient(to right,#808080 0,#808080 1px,transparent 1px,transparent 2px)"></i>
<i style="left:67px;top:303px;width:9px;height:9px;background:#fff;box-sizing:border-box;border:1px solid #848484"></i>
<i style="left:69px;top:307px;width:5px;height:1px;background:#000;"></i>
<i style="left:71px;top:305px;width:1px;height:5px;background:#000;"></i>
<svg style="left:82px;top:299px" width="16" height="16" viewBox="0 0 16 16"  class="gl"><path d="M2.4 4.5h-1.9v7h1.9" fill="none" stroke="#F01818" stroke-width="1.1"/><text x="2.6" y="7.8" font-family="Liberation Sans,sans-serif" font-size="9.6" fill="#000" stroke="#000" stroke-width="0.3" textLength="13.4" lengthAdjust="spacingAndGlyphs">010</text><text x="4.4" y="15.9" font-family="Liberation Sans,sans-serif" font-size="9.6" fill="#000" stroke="#000" stroke-width="0.3" textLength="11" lengthAdjust="spacingAndGlyphs">101</text></svg>
<i style="left:77px;top:323px;height:1px;width:5px;background:repeating-linear-gradient(to right,#808080 0,#808080 1px,transparent 1px,transparent 2px)"></i>
<i style="left:67px;top:319px;width:9px;height:9px;background:#fff;box-sizing:border-box;border:1px solid #848484"></i>
<i style="left:69px;top:323px;width:5px;height:1px;background:#000;"></i>
<i style="left:71px;top:321px;width:1px;height:5px;background:#000;"></i>
<svg style="left:82px;top:315px" width="16" height="16" viewBox="0 0 16 16"  class="gl"><path d="M2.4 4.5h-1.9v7h1.9" fill="none" stroke="#F01818" stroke-width="1.1"/><text x="2.6" y="7.8" font-family="Liberation Sans,sans-serif" font-size="9.6" fill="#000" stroke="#000" stroke-width="0.3" textLength="13.4" lengthAdjust="spacingAndGlyphs">010</text><text x="4.4" y="15.9" font-family="Liberation Sans,sans-serif" font-size="9.6" fill="#000" stroke="#000" stroke-width="0.3" textLength="11" lengthAdjust="spacingAndGlyphs">101</text></svg>
<i style="left:77px;top:339px;height:1px;width:5px;background:repeating-linear-gradient(to right,#808080 0,#808080 1px,transparent 1px,transparent 2px)"></i>
<i style="left:67px;top:335px;width:9px;height:9px;background:#fff;box-sizing:border-box;border:1px solid #848484"></i>
<i style="left:69px;top:339px;width:5px;height:1px;background:#000;"></i>
<svg style="left:82px;top:331px" width="16" height="16" viewBox="0 0 16 16"  class="gl"><path d="M2.4 4.5h-1.9v7h1.9" fill="none" stroke="#F01818" stroke-width="1.1"/><text x="2.6" y="7.8" font-family="Liberation Sans,sans-serif" font-size="9.6" fill="#000" stroke="#000" stroke-width="0.3" textLength="13.4" lengthAdjust="spacingAndGlyphs">010</text><text x="4.4" y="15.9" font-family="Liberation Sans,sans-serif" font-size="9.6" fill="#000" stroke="#000" stroke-width="0.3" textLength="11" lengthAdjust="spacingAndGlyphs">101</text></svg>
<i style="left:101px;top:331px;width:236px;height:16px;background:#0078D7;"></i>
<i style="left:101px;top:331px;width:236px;height:16px;background:transparent;box-sizing:border-box;border:1px dotted #ff8728"></i>
<i style="left:92px;top:355px;height:1px;width:9px;background:repeating-linear-gradient(to right,#808080 0,#808080 1px,transparent 1px,transparent 2px)"></i>
<svg style="left:99.8px;top:347px" width="16" height="16" viewBox="0 0 16 16" ><path d="M5.4 8l-1.8 1.6 1 3.2 1.6 0.6-0.4 2.4h4.6l0.4-2.2 2-0.8 0.8-3.2-1-2.4z" fill="#E8986A"/><path d="M6.4 12.6l-0.6 3.2h3.4l0.6-2.4z" fill="#F4B488"/><path d="M3.4 8.2l3.2-0.6 1.4 1.6-0.8 2.2-1.8 1-1.8-1.8z" fill="#1a1008"/><path d="M10 9.2h2.4" stroke="#2a1a0a" stroke-width="1"/><path d="M11.4 9.4h1.8" stroke="#F8E8C0" stroke-width="0.9"/><path d="M2.2 7.8C2.4 3.6 5 1.2 8.4 1.2c3.4 0 5.4 2.4 5.8 5l2 1.4c-4 0.8-9.4 1-14 0.2z" fill="#F27C0E"/><path d="M3 6.4c1-3.4 3.4-4.8 6-4.6" stroke="#FFA83C" stroke-width="1.2" fill="none"/><rect x="7" y="4.8" width="4.4" height="2" fill="#FFD024"/></svg>
<i style="left:92px;top:371px;height:1px;width:9px;background:repeating-linear-gradient(to right,#808080 0,#808080 1px,transparent 1px,transparent 2px)"></i>
<svg style="left:101px;top:363px" width="16" height="16" viewBox="0 0 16 16" ><defs><linearGradient id="tb" x1="0" y1="0" x2="0" y2="1"><stop offset="0" stop-color="#3A92F0"/><stop offset="1" stop-color="#1B63C8"/></linearGradient></defs><ellipse cx="8" cy="14.5" rx="7.8" ry="0.7" fill="#3a3a3a" opacity=".85"/><path d="M0 7h8.6l1.2-1.9h1.2l-0.6 6.6h-10.4z" fill="url(#tb)"/><path d="M10.6 5.9h2.9l1.3 2.5 1.2 0.5v2.8h-5.7z" fill="#F09A1C"/><path d="M10.6 5.9h2.9l0.6 1.2h-3.6z" fill="#F8B84A"/><path d="M11.2 6.7h2.2l0.7 1.5h-2.9z" fill="#E6FFFF"/><rect x="0.6" y="12" width="15" height="2" fill="#fff" opacity=".85"/><rect x="1.4" y="11.4" width="14.6" height="0.8" fill="#1a1a1a" /><circle cx="3.4" cy="11.7" r="1.9" fill="#111"/><circle cx="3.4" cy="11.7" r="0.85" fill="#FFFF8A"/><circle cx="13.3" cy="11.7" r="1.9" fill="#111"/><circle cx="13.3" cy="11.7" r="0.85" fill="#FFFF8A"/></svg>
<i style="left:92px;top:387px;height:1px;width:9px;background:repeating-linear-gradient(to right,#808080 0,#808080 1px,transparent 1px,transparent 2px)"></i>
<svg style="left:101px;top:379px" width="16" height="16" viewBox="0 0 16 16" ><rect x="5.05" y="4.8500000000000005" width="5.5" height="3.1" rx="1.5" fill="#D85400"/><rect x="5.199999999999999" y="4.9" width="5.2" height="2.4" rx="1.2" fill="#F06A04"/><rect x="6.6" y="5.8500000000000005" width="2.6" height="0.6" rx="0.3" fill="#FFAE66"/><rect x="2.3499999999999996" y="6.95" width="5.5" height="3.1" rx="1.5" fill="#D85400"/><rect x="2.4999999999999996" y="7.0" width="5.2" height="2.4" rx="1.2" fill="#F06A04"/><rect x="3.8999999999999995" y="7.95" width="2.6" height="0.6" rx="0.3" fill="#FFAE66"/><rect x="7.75" y="6.95" width="5.5" height="3.1" rx="1.5" fill="#D85400"/><rect x="7.9" y="7.0" width="5.2" height="2.4" rx="1.2" fill="#F06A04"/><rect x="9.3" y="7.95" width="2.6" height="0.6" rx="0.3" fill="#FFAE66"/><rect x="0.04999999999999982" y="9.149999999999999" width="5.5" height="3.1" rx="1.5" fill="#D85400"/><rect x="0.19999999999999973" y="9.2" width="5.2" height="2.4" rx="1.2" fill="#F06A04"/><rect x="1.5999999999999999" y="10.149999999999999" width="2.6" height="0.6" rx="0.3" fill="#FFAE66"/><rect x="5.15" y="9.149999999999999" width="5.5" height="3.1" rx="1.5" fill="#D85400"/><rect x="5.300000000000001" y="9.2" width="5.2" height="2.4" rx="1.2" fill="#F06A04"/><rect x="6.7" y="10.149999999999999" width="2.6" height="0.6" rx="0.3" fill="#FFAE66"/><rect x="10.35" y="9.149999999999999" width="5.5" height="3.1" rx="1.5" fill="#D85400"/><rect x="10.5" y="9.2" width="5.2" height="2.4" rx="1.2" fill="#F06A04"/><rect x="11.9" y="10.149999999999999" width="2.6" height="0.6" rx="0.3" fill="#FFAE66"/></svg>
<i style="left:77px;top:403px;height:1px;width:5px;background:repeating-linear-gradient(to right,#808080 0,#808080 1px,transparent 1px,transparent 2px)"></i>
<i style="left:67px;top:399px;width:9px;height:9px;background:#fff;box-sizing:border-box;border:1px solid #848484"></i>
<i style="left:69px;top:403px;width:5px;height:1px;background:#000;"></i>
<i style="left:71px;top:401px;width:1px;height:5px;background:#000;"></i>
<svg style="left:82px;top:395px" width="16" height="16" viewBox="0 0 16 16"  class="gl"><path d="M2.4 4.5h-1.9v7h1.9" fill="none" stroke="#F01818" stroke-width="1.1"/><text x="2.6" y="7.8" font-family="Liberation Sans,sans-serif" font-size="9.6" fill="#000" stroke="#000" stroke-width="0.3" textLength="13.4" lengthAdjust="spacingAndGlyphs">010</text><text x="4.4" y="15.9" font-family="Liberation Sans,sans-serif" font-size="9.6" fill="#000" stroke="#000" stroke-width="0.3" textLength="11" lengthAdjust="spacingAndGlyphs">101</text></svg>
<i style="left:77px;top:419px;height:1px;width:5px;background:repeating-linear-gradient(to right,#808080 0,#808080 1px,transparent 1px,transparent 2px)"></i>
<i style="left:67px;top:415px;width:9px;height:9px;background:#fff;box-sizing:border-box;border:1px solid #848484"></i>
<i style="left:69px;top:419px;width:5px;height:1px;background:#000;"></i>
<i style="left:71px;top:417px;width:1px;height:5px;background:#000;"></i>
<svg style="left:82px;top:411px" width="16" height="16" viewBox="0 0 16 16"  class="gl"><path d="M2.4 4.5h-1.9v7h1.9" fill="none" stroke="#F01818" stroke-width="1.1"/><text x="2.6" y="7.8" font-family="Liberation Sans,sans-serif" font-size="9.6" fill="#000" stroke="#000" stroke-width="0.3" textLength="13.4" lengthAdjust="spacingAndGlyphs">010</text><text x="4.4" y="15.9" font-family="Liberation Sans,sans-serif" font-size="9.6" fill="#000" stroke="#000" stroke-width="0.3" textLength="11" lengthAdjust="spacingAndGlyphs">101</text></svg>
<i style="left:77px;top:435px;height:1px;width:5px;background:repeating-linear-gradient(to right,#808080 0,#808080 1px,transparent 1px,transparent 2px)"></i>
<i style="left:67px;top:431px;width:9px;height:9px;background:#fff;box-sizing:border-box;border:1px solid #848484"></i>
<i style="left:69px;top:435px;width:5px;height:1px;background:#000;"></i>
<i style="left:71px;top:433px;width:1px;height:5px;background:#000;"></i>
<svg style="left:82px;top:427px" width="16" height="16" viewBox="0 0 16 16"  class="gl"><path d="M2.4 4.5h-1.9v7h1.9" fill="none" stroke="#F01818" stroke-width="1.1"/><text x="2.6" y="7.8" font-family="Liberation Sans,sans-serif" font-size="9.6" fill="#000" stroke="#000" stroke-width="0.3" textLength="13.4" lengthAdjust="spacingAndGlyphs">010</text><text x="4.4" y="15.9" font-family="Liberation Sans,sans-serif" font-size="9.6" fill="#000" stroke="#000" stroke-width="0.3" textLength="11" lengthAdjust="spacingAndGlyphs">101</text></svg>
<i style="left:77px;top:451px;height:1px;width:5px;background:repeating-linear-gradient(to right,#808080 0,#808080 1px,transparent 1px,transparent 2px)"></i>
<i style="left:67px;top:447px;width:9px;height:9px;background:#fff;box-sizing:border-box;border:1px solid #848484"></i>
<i style="left:69px;top:451px;width:5px;height:1px;background:#000;"></i>
<i style="left:71px;top:449px;width:1px;height:5px;background:#000;"></i>
<svg style="left:82px;top:443px" width="16" height="16" viewBox="0 0 16 16"  class="gl"><path d="M2.4 4.5h-1.9v7h1.9" fill="none" stroke="#F01818" stroke-width="1.1"/><text x="2.6" y="7.8" font-family="Liberation Sans,sans-serif" font-size="9.6" fill="#000" stroke="#000" stroke-width="0.3" textLength="13.4" lengthAdjust="spacingAndGlyphs">010</text><text x="4.4" y="15.9" font-family="Liberation Sans,sans-serif" font-size="9.6" fill="#000" stroke="#000" stroke-width="0.3" textLength="11" lengthAdjust="spacingAndGlyphs">101</text></svg>
<i style="left:77px;top:467px;height:1px;width:5px;background:repeating-linear-gradient(to right,#808080 0,#808080 1px,transparent 1px,transparent 2px)"></i>
<i style="left:67px;top:463px;width:9px;height:9px;background:#fff;box-sizing:border-box;border:1px solid #848484"></i>
<i style="left:69px;top:467px;width:5px;height:1px;background:#000;"></i>
<i style="left:71px;top:465px;width:1px;height:5px;background:#000;"></i>
<svg style="left:82px;top:459px" width="16" height="16" viewBox="0 0 16 16"  class="gl"><path d="M2.4 4.5h-1.9v7h1.9" fill="none" stroke="#F01818" stroke-width="1.1"/><text x="2.6" y="7.8" font-family="Liberation Sans,sans-serif" font-size="9.6" fill="#000" stroke="#000" stroke-width="0.3" textLength="13.4" lengthAdjust="spacingAndGlyphs">010</text><text x="4.4" y="15.9" font-family="Liberation Sans,sans-serif" font-size="9.6" fill="#000" stroke="#000" stroke-width="0.3" textLength="11" lengthAdjust="spacingAndGlyphs">101</text></svg>
<i style="left:525px;top:130px;width:49px;height:1px;background:#FFFFFF;"></i>
<i style="left:525px;top:130px;width:1px;height:955px;background:#FFFFFF;"></i>
<i style="left:574px;top:131px;width:1px;height:20px;background:#A0A0A0;"></i>
<i style="left:575px;top:130px;width:1px;height:21px;background:#696969;"></i>
<i style="left:576px;top:150px;width:1177px;height:1px;background:#FFFFFF;"></i>
<i style="left:1753px;top:150px;width:1px;height:935px;background:#A0A0A0;"></i>
<i style="left:1754px;top:149px;width:1px;height:937px;background:#696969;"></i>
<i style="left:525px;top:1084px;width:1229px;height:1px;background:#A0A0A0;"></i>
<i style="left:525px;top:1085px;width:1230px;height:1px;background:#696969;"></i>
<i style="left:530px;top:155px;width:1219px;height:925px;background:#FFFFFF;"></i>
<i style="left:530px;top:155px;width:1219px;height:1px;background:#A0A0A0;"></i>
<i style="left:530px;top:155px;width:1px;height:925px;background:#A0A0A0;"></i>
<i style="left:531px;top:156px;width:1217px;height:1px;background:#696969;"></i>
<i style="left:531px;top:156px;width:1px;height:923px;background:#696969;"></i>
<i style="left:531px;top:1078px;width:1218px;height:1px;background:#E3E3E3;"></i>
<i style="left:1747px;top:156px;width:1px;height:923px;background:#E3E3E3;"></i>
<i style="left:530px;top:1079px;width:1220px;height:1px;background:#FFFFFF;"></i>
<i style="left:1748px;top:155px;width:1px;height:925px;background:#FFFFFF;"></i>
<i style="left:564px;top:158px;width:28px;height:16px;background:#F0F0F0;"></i>
<svg style="left:546.8px;top:158px" width="16" height="16" viewBox="0 0 16 16" ><path d="M5.4 8l-1.8 1.6 1 3.2 1.6 0.6-0.4 2.4h4.6l0.4-2.2 2-0.8 0.8-3.2-1-2.4z" fill="#E8986A"/><path d="M6.4 12.6l-0.6 3.2h3.4l0.6-2.4z" fill="#F4B488"/><path d="M3.4 8.2l3.2-0.6 1.4 1.6-0.8 2.2-1.8 1-1.8-1.8z" fill="#1a1008"/><path d="M10 9.2h2.4" stroke="#2a1a0a" stroke-width="1"/><path d="M11.4 9.4h1.8" stroke="#F8E8C0" stroke-width="0.9"/><path d="M2.2 7.8C2.4 3.6 5 1.2 8.4 1.2c3.4 0 5.4 2.4 5.8 5l2 1.4c-4 0.8-9.4 1-14 0.2z" fill="#F27C0E"/><path d="M3 6.4c1-3.4 3.4-4.8 6-4.6" stroke="#FFA83C" stroke-width="1.2" fill="none"/><rect x="7" y="4.8" width="4.4" height="2" fill="#FFD024"/></svg>
<svg style="left:548px;top:175px" width="16" height="16" viewBox="0 0 16 16" ><defs><linearGradient id="tb" x1="0" y1="0" x2="0" y2="1"><stop offset="0" stop-color="#3A92F0"/><stop offset="1" stop-color="#1B63C8"/></linearGradient></defs><ellipse cx="8" cy="14.5" rx="7.8" ry="0.7" fill="#3a3a3a" opacity=".85"/><path d="M0 7h8.6l1.2-1.9h1.2l-0.6 6.6h-10.4z" fill="url(#tb)"/><path d="M10.6 5.9h2.9l1.3 2.5 1.2 0.5v2.8h-5.7z" fill="#F09A1C"/><path d="M10.6 5.9h2.9l0.6 1.2h-3.6z" fill="#F8B84A"/><path d="M11.2 6.7h2.2l0.7 1.5h-2.9z" fill="#E6FFFF"/><rect x="0.6" y="12" width="15" height="2" fill="#fff" opacity=".85"/><rect x="1.4" y="11.4" width="14.6" height="0.8" fill="#1a1a1a" /><circle cx="3.4" cy="11.7" r="1.9" fill="#111"/><circle cx="3.4" cy="11.7" r="0.85" fill="#FFFF8A"/><circle cx="13.3" cy="11.7" r="1.9" fill="#111"/><circle cx="13.3" cy="11.7" r="0.85" fill="#FFFF8A"/></svg>
<svg style="left:548px;top:192px" width="16" height="16" viewBox="0 0 16 16" ><rect x="5.05" y="4.8500000000000005" width="5.5" height="3.1" rx="1.5" fill="#D85400"/><rect x="5.199999999999999" y="4.9" width="5.2" height="2.4" rx="1.2" fill="#F06A04"/><rect x="6.6" y="5.8500000000000005" width="2.6" height="0.6" rx="0.3" fill="#FFAE66"/><rect x="2.3499999999999996" y="6.95" width="5.5" height="3.1" rx="1.5" fill="#D85400"/><rect x="2.4999999999999996" y="7.0" width="5.2" height="2.4" rx="1.2" fill="#F06A04"/><rect x="3.8999999999999995" y="7.95" width="2.6" height="0.6" rx="0.3" fill="#FFAE66"/><rect x="7.75" y="6.95" width="5.5" height="3.1" rx="1.5" fill="#D85400"/><rect x="7.9" y="7.0" width="5.2" height="2.4" rx="1.2" fill="#F06A04"/><rect x="9.3" y="7.95" width="2.6" height="0.6" rx="0.3" fill="#FFAE66"/><rect x="0.04999999999999982" y="9.149999999999999" width="5.5" height="3.1" rx="1.5" fill="#D85400"/><rect x="0.19999999999999973" y="9.2" width="5.2" height="2.4" rx="1.2" fill="#F06A04"/><rect x="1.5999999999999999" y="10.149999999999999" width="2.6" height="0.6" rx="0.3" fill="#FFAE66"/><rect x="5.15" y="9.149999999999999" width="5.5" height="3.1" rx="1.5" fill="#D85400"/><rect x="5.300000000000001" y="9.2" width="5.2" height="2.4" rx="1.2" fill="#F06A04"/><rect x="6.7" y="10.149999999999999" width="2.6" height="0.6" rx="0.3" fill="#FFAE66"/><rect x="10.35" y="9.149999999999999" width="5.5" height="3.1" rx="1.5" fill="#D85400"/><rect x="10.5" y="9.2" width="5.2" height="2.4" rx="1.2" fill="#F06A04"/><rect x="11.9" y="10.149999999999999" width="2.6" height="0.6" rx="0.3" fill="#FFAE66"/></svg>
<i style="left:1px;top:1086px;width:1754px;height:30px;background:#FFFFFF;"></i>
<i style="left:0px;top:1116px;width:1757px;height:1px;background:#696969;"></i>
<i style="left:3px;top:1089px;width:84px;height:25px;background:#F0F0F0;"></i>
<i style="left:3px;top:1089px;width:84px;height:1px;background:#A0A0A0;"></i>
<i style="left:3px;top:1089px;width:1px;height:25px;background:#A0A0A0;"></i>
<i style="left:92px;top:1089px;width:295px;height:25px;background:#F0F0F0;"></i>
<i style="left:92px;top:1089px;width:295px;height:1px;background:#A0A0A0;"></i>
<i style="left:92px;top:1089px;width:1px;height:25px;background:#A0A0A0;"></i>
<i style="left:392px;top:1089px;width:1291px;height:25px;background:#F0F0F0;"></i>
<i style="left:392px;top:1089px;width:1291px;height:1px;background:#A0A0A0;"></i>
<i style="left:392px;top:1089px;width:1px;height:25px;background:#A0A0A0;"></i>
<i style="left:1688px;top:1089px;width:29px;height:25px;background:#F0F0F0;"></i>
<i style="left:1688px;top:1089px;width:29px;height:1px;background:#A0A0A0;"></i>
<i style="left:1688px;top:1089px;width:1px;height:25px;background:#A0A0A0;"></i>
<i style="left:1722px;top:1089px;width:29px;height:25px;background:#F0F0F0;"></i>
<i style="left:1722px;top:1089px;width:29px;height:1px;background:#A0A0A0;"></i>
<i style="left:1722px;top:1089px;width:1px;height:25px;background:#A0A0A0;"></i>
<i style="left:89px;top:1087px;width:1px;height:29px;background:#A0A0A0;"></i>
<i style="left:389px;top:1087px;width:1px;height:29px;background:#A0A0A0;"></i>
<i style="left:1685px;top:1087px;width:1px;height:29px;background:#A0A0A0;"></i>
<i style="left:1719px;top:1087px;width:1px;height:29px;background:#A0A0A0;"></i>
<i style="left:1753px;top:1087px;width:1px;height:29px;background:#A0A0A0;"></i>
<svg style="left:1694px;top:1093px" width="18" height="18" viewBox="0 0 18 18" ><circle cx="9" cy="8.8" r="8" fill="#9E9E9E"/><rect x="7.7" y="7" width="2.5" height="7" fill="#EDEDED"/><rect x="7.7" y="3.8" width="2.5" height="2.2" fill="#EDEDED"/><path d="M1.2 1.2l15.6 15.2" stroke="#FF0000" stroke-width="2"/></svg>
<span id="t0" style="left:34.00px;top:7.14px;font-size:12px;color:#000;letter-spacing:-0.350px;"><u>С</u>мета</span>
<span id="t1" style="left:79.20px;top:7.14px;font-size:12px;color:#000;letter-spacing:-0.280px;">Работа</span>
<span id="t2" style="left:129.40px;top:7.14px;font-size:12px;color:#000;letter-spacing:0.167px;">Информация</span>
<span id="t3" style="left:216.50px;top:7.14px;font-size:12px;color:#000;letter-spacing:0.270px;">Справочники</span>
<span id="t4" style="left:302.30px;top:7.14px;font-size:12px;color:#000;letter-spacing:0.300px;">Настройки</span>
<span id="t5" style="left:375.30px;top:7.14px;font-size:12px;color:#000;letter-spacing:-0.163px;">Отдохнуть</span>
<span id="t6" style="left:444.60px;top:7.14px;font-size:12px;color:#000;letter-spacing:0.033px;">Окно</span>
<span id="t7" style="left:484.22px;top:7.14px;font-size:12px;color:#000;transform:scaleX(1.0778);">Помощь</span>
<span id="t8" style="left:546.40px;top:7.14px;font-size:12px;color:#000;letter-spacing:0.118px;">Структурные справочники</span>
<span id="t9" style="left:387.10px;top:32.14px;font-size:12px;color:#A3A3A3;letter-spacing:0.048px;">Изменить тип строки...</span>
<span id="t10" style="left:707.20px;top:32.14px;font-size:12px;color:#A3A3A3;letter-spacing:-0.059px;">Копировать в смету</span>
<span id="t11" style="left:15.90px;top:58.14px;font-size:12px;color:#A3A3A3;letter-spacing:-0.017px;">Ресурсы</span>
<span id="t12" style="left:72.30px;top:58.14px;font-size:12px;color:#A3A3A3;letter-spacing:-0.011px;">Панель цен</span>
<span id="t13" style="left:146.10px;top:58.14px;font-size:12px;color:#A3A3A3;letter-spacing:-0.023px;">Лимит. затраты</span>
<span id="t14" style="left:238.90px;top:58.14px;font-size:12px;color:#A3A3A3;letter-spacing:-0.300px;">ЭСН</span>
<span id="t15" style="left:273.10px;top:58.14px;font-size:12px;color:#A3A3A3;letter-spacing:-0.255px;">Состав работ</span>
<span id="t16" style="left:355.10px;top:58.14px;font-size:12px;color:#A3A3A3;letter-spacing:-0.300px;">Тех. часть</span>
<span id="t17" style="left:417.20px;top:58.14px;font-size:12px;color:#A3A3A3;letter-spacing:0.100px;">Индексы</span>
<span id="t18" style="left:474.90px;top:58.14px;font-size:12px;color:#A3A3A3;letter-spacing:0.329px;">Поправки</span>
<span id="t19" style="left:538.90px;top:58.14px;font-size:12px;color:#A3A3A3;letter-spacing:0.333px;">Формулы</span>
<span id="t20" style="left:603.50px;top:58.14px;font-size:12px;color:#A3A3A3;letter-spacing:-0.338px;">Структура</span>
<span id="t21" style="left:669.20px;top:59.14px;font-size:12px;color:#A3A3A3;letter-spacing:-0.211px;">Оглавление</span>
<span id="t22" style="left:744.30px;top:58.14px;font-size:12px;color:#000;letter-spacing:0.168px;">Список открытых окон</span>
<span id="t23" style="left:17.30px;top:85.14px;font-size:12px;color:#000;letter-spacing:0.270px;">Справочники</span>
<span id="t24" style="left:109.20px;top:85.14px;font-size:12px;color:#000;letter-spacing:0.267px;">Проекты</span>
<span id="t25" style="left:171.10px;top:85.14px;font-size:12px;color:#000;letter-spacing:-0.225px;">Аналитика</span>
<span id="t26" style="left:242.10px;top:85.14px;font-size:12px;color:#000;letter-spacing:0.067px;">Стройки</span>
<span id="t27" style="left:301.60px;top:86.14px;font-size:12px;color:#000;letter-spacing:0.250px;">Нормативы</span>
<span id="t28" style="left:377.00px;top:85.14px;font-size:12px;color:#000;letter-spacing:-0.015px;">ЭСН и методики</span>
<span id="t29" style="left:479.10px;top:85.14px;font-size:12px;color:#000;letter-spacing:0.288px;">Поисковые маршруты</span>
<span id="t30" style="left:618.30px;top:85.14px;font-size:12px;color:#000;letter-spacing:0.096px;">Справочник расчётных формул</span>
<span id="t31" style="left:807.30px;top:85.14px;font-size:12px;color:#000;letter-spacing:-0.074px;">Шаблоны Сводных Расчётов</span>
<span id="t32" style="left:978.40px;top:85.14px;font-size:12px;color:#000;letter-spacing:0.329px;">Поправки</span>
<span id="t33" style="left:1046.30px;top:85.14px;font-size:12px;color:#000;letter-spacing:0.020px;">Организации</span>
<span id="t34" style="left:16.90px;top:110.14px;font-size:12px;color:#000;letter-spacing:-0.100px;">Действие</span>
<span id="t35" style="left:79.10px;top:110.14px;font-size:12px;color:#000;letter-spacing:-0.450px;">Вид</span>
<span id="t36" class="ms" style="left:9.00px;top:133.14px;font-size:12px;color:#000;transform:scaleX(0.8772);">Структура</span>
<span id="t37" class="ms" style="left:46.06px;top:157.14px;font-size:12px;color:#000;transform:scaleX(0.9435);">Нормативы</span>
<span id="t38" class="ms" style="left:65.05px;top:173.14px;font-size:12px;color:#000;transform:scaleX(0.9529);">Расценки</span>
<span id="t39" class="ms" style="left:65.08px;top:189.14px;font-size:12px;color:#000;transform:scaleX(0.9228);">Машины и механизмы</span>
<span id="t40" class="ms" style="left:65.05px;top:205.14px;font-size:12px;color:#000;transform:scaleX(0.9457);">Ценники</span>
<span id="t41" class="ms" style="left:65.07px;top:221.14px;font-size:12px;color:#000;transform:scaleX(0.9296);">Индексы пересчета</span>
<span id="t42" class="ms" style="left:65.06px;top:237.14px;font-size:12px;color:#000;transform:scaleX(0.9435);">Ресурсы</span>
<span id="t43" class="ms" style="left:85.00px;top:253.14px;font-size:12px;color:#000;transform:scaleX(0.9179);">Сметные нормы списания</span>
<span id="t44" class="ms" style="left:103.07px;top:269.14px;font-size:12px;color:#000;transform:scaleX(0.9277);">Коды ценников</span>
<span id="t45" class="ms" style="left:103.11px;top:285.14px;font-size:12px;color:#000;transform:scaleX(0.8921);">Коды ОКП для ТСН-2001</span>
<span id="t46" class="ms" style="left:103.09px;top:301.14px;font-size:12px;color:#000;transform:scaleX(0.908);">Коды ОКП для ТСН-2001 (История развития)</span>
<span id="t47" class="ms" style="left:103.10px;top:317.14px;font-size:12px;color:#000;transform:scaleX(0.905);">Коды ОКП для СН-2012 Выпуск № 1 (в ценах на 01.10.2024 г)</span>
<span id="t48" class="ms" style="left:103.08px;top:333.14px;font-size:12px;color:#fff;transform:scaleX(0.9237);">Коды ценников ФСНБ-2022 - Изменения И13</span>
<span id="t49" class="ms" style="left:123.00px;top:349.14px;font-size:12px;color:#000;transform:scaleX(0.8846);">Труд</span>
<span id="t50" class="ms" style="left:122.08px;top:365.14px;font-size:12px;color:#000;transform:scaleX(0.9228);">Машины и механизмы</span>
<span id="t51" class="ms" style="left:122.05px;top:381.14px;font-size:12px;color:#000;transform:scaleX(0.9457);">Ценники</span>
<span id="t52" class="ms" style="left:103.08px;top:397.14px;font-size:12px;color:#000;transform:scaleX(0.9167);">Коды ценников - 2017</span>
<span id="t53" class="ms" style="left:103.08px;top:413.14px;font-size:12px;color:#000;transform:scaleX(0.9159);">Коды ценников - 2017 (История развития)</span>
<span id="t54" class="ms" style="left:103.09px;top:429.14px;font-size:12px;color:#000;transform:scaleX(0.9059);">Коды ОКП для ТСН-2001 МГЭ Дополнение 74</span>
<span id="t55" class="ms" style="left:103.11px;top:445.14px;font-size:12px;color:#000;transform:scaleX(0.8922);">Коды ОКП для ТСН-2001 МГЭ</span>
<span id="t56" class="ms" style="left:103.08px;top:461.14px;font-size:12px;color:#000;transform:scaleX(0.9237);">Коды ценников ФСНБ-2022 - Изменения И12</span>
<span id="t57" class="ms" style="left:533.00px;top:133.14px;font-size:12px;color:#000;transform:scaleX(0.875);">Состав</span>
<span id="t58" class="ms" style="left:567.00px;top:160.14px;font-size:12px;color:#000;transform:scaleX(0.8846);">Труд</span>
<span id="t59" class="ms" style="left:565.68px;top:177.14px;font-size:12px;color:#000;transform:scaleX(0.9228);">Машины и механизмы</span>
<span id="t60" class="ms" style="left:565.65px;top:194.14px;font-size:12px;color:#000;transform:scaleX(0.9457);">Ценники</span>
<span id="t61" style="left:1728.51px;top:1096.14px;font-size:12px;color:#000;transform:scaleX(0.8937);">RU</span>
</body></html>
